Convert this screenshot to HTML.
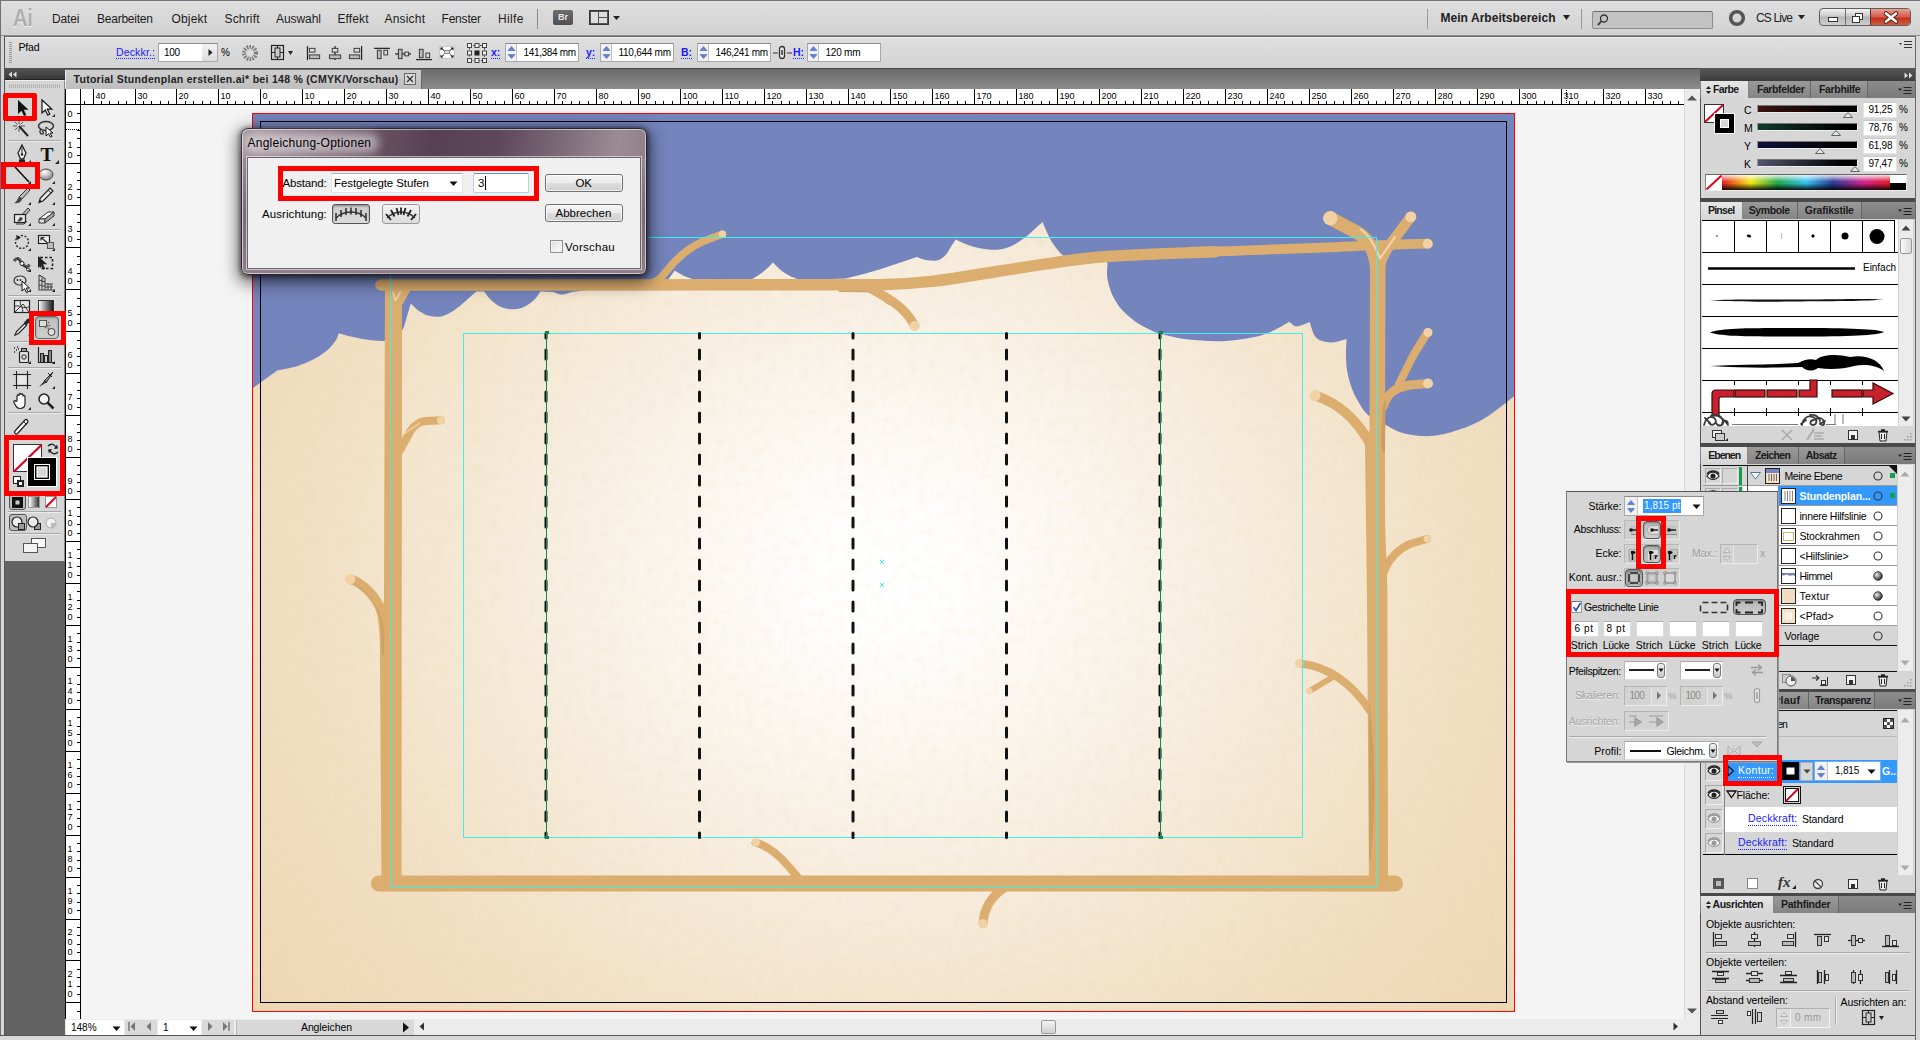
<!DOCTYPE html>
<html lang="de"><head><meta charset="utf-8"><title>Adobe Illustrator</title>
<style>
*{box-sizing:border-box;margin:0;padding:0}
html,body{width:1920px;height:1040px;overflow:hidden;background:#d6d6d6}
body{font-family:"Liberation Sans",sans-serif;font-size:11px;color:#000}
#root{position:absolute;left:0;top:0;width:1920px;height:1040px;overflow:hidden;background:#d6d6d6}
.a{position:absolute}
.t{position:absolute;white-space:nowrap;line-height:14px;height:14px}
.b{font-weight:bold}
.inp{position:absolute;background:#fff;border:1px solid #a9a9a9;border-top-color:#8a8a8a}
.lnk{color:#1a1aff;border-bottom:1px dotted #1a1aff}
.red{position:absolute;border:5px solid #f00}
.tab{position:absolute;height:17px;font-weight:bold;font-size:11px;line-height:16px;color:#222;padding-left:8px;border-right:1px solid #666;background:linear-gradient(#9a9a9a,#848484)}
.tab.on{background:linear-gradient(#e6e6e6,#d6d6d6);color:#111;border-right:1px solid #888}
.tabrow{position:absolute;height:17px;background:linear-gradient(#8c8c8c,#7a7a7a)}
.sep{position:absolute;background:#4a4a4a}
svg{position:absolute;overflow:visible}
</style>
</head>
<body>
<div id="root">
<div class="a" style="left:0;top:0;width:1920px;height:36px;background:linear-gradient(#dedede,#d2d2d2);border-bottom:1px solid #8e8e8e;border-top:1px solid #9a9a9a"></div>
<div class="a" style="left:0;top:0;width:1px;height:1040px;background:#6b6f80"></div><div class="a" style="left:0;top:0;width:1920px;height:1px;background:#77737a"></div>
<div class="t b" style="left:12.5px;top:7px;font-size:11px;font-size:23px;line-height:23px;height:23px;color:#aeaeae;letter-spacing:-0.5px;text-shadow:0 1px 0 #f2f2f2;transform-origin:0 0;transform:scaleX(0.88)">Ai</div>
<div class="t" style="left:52px;top:12px;font-size:12px;letter-spacing:-0.18px;color:#1c1c1c">Datei</div>
<div class="t" style="left:97px;top:12px;font-size:12px;letter-spacing:-0.23px;color:#1c1c1c">Bearbeiten</div>
<div class="t" style="left:171.5px;top:12px;font-size:12px;letter-spacing:0.16px;color:#1c1c1c">Objekt</div>
<div class="t" style="left:224.5px;top:12px;font-size:12px;letter-spacing:0.17px;color:#1c1c1c">Schrift</div>
<div class="t" style="left:276px;top:12px;font-size:12px;letter-spacing:-0.06px;color:#1c1c1c">Auswahl</div>
<div class="t" style="left:337.5px;top:12px;font-size:12px;letter-spacing:0.11px;color:#1c1c1c">Effekt</div>
<div class="t" style="left:384.5px;top:12px;font-size:12px;letter-spacing:0.19px;color:#1c1c1c">Ansicht</div>
<div class="t" style="left:441.5px;top:12px;font-size:12px;letter-spacing:-0.20px;color:#1c1c1c">Fenster</div>
<div class="t" style="left:498px;top:12px;font-size:12px;letter-spacing:0.37px;color:#1c1c1c">Hilfe</div>
<div class="a" style="left:537px;top:9px;width:1px;height:20px;background:#8a8a8a"></div>
<div class="a" style="left:553px;top:10px;width:20px;height:15px;background:linear-gradient(#6d6d6d,#4f4f4f);border-radius:2px;color:#e8e8e8;font-size:9px;font-weight:bold;line-height:15px;text-align:center">Br</div>
<svg style="left:589px;top:10px" width="36" height="16"><rect x="0.5" y="0.5" width="19" height="14" fill="#555" stroke="#333"/><rect x="2" y="2" width="7" height="11" fill="#ddd"/><rect x="10" y="2" width="8" height="5" fill="#ddd"/><rect x="10" y="8" width="8" height="5" fill="#ddd"/><path d="M24 6h7l-3.500 4z" fill="#222"/></svg>
<div class="a" style="left:1427px;top:9px;width:1px;height:20px;background:#9a9a9a"></div>
<div class="t" style="left:1440.5px;top:11px;font-size:12px;letter-spacing:0.04px;font-weight:bold;color:#222">Mein Arbeitsbereich</div>
<svg style="left:1562px;top:14px" width="10" height="8"><path d="M1 1h7l-3.500 5z" fill="#222"/></svg>
<div class="a" style="left:1581px;top:9px;width:1px;height:20px;background:#9a9a9a"></div>
<div class="a" style="left:1592px;top:11px;width:121px;height:18px;background:#c2c2c2;border:1px solid #8c8c8c;border-top-color:#6f6f6f;border-radius:2px"></div>
<svg style="left:1596px;top:13px" width="14" height="14"><circle cx="8" cy="5.500" r="3.500" fill="none" stroke="#333" stroke-width="1.300"/><path d="M5.500 8L2 12" stroke="#333" stroke-width="1.800"/></svg>
<svg style="left:1728px;top:9px" width="18" height="18"><circle cx="9" cy="9" r="6.300" fill="none" stroke="#555" stroke-width="3.600"/></svg>
<div class="t" style="left:1756px;top:11px;font-size:12px;letter-spacing:-0.84px;color:#222">CS Live</div>
<svg style="left:1797px;top:14px" width="10" height="8"><path d="M1 1h7l-3.500 4.500z" fill="#222"/></svg>
<div class="a" style="left:1819px;top:8px;width:92px;height:18px;border:1px solid #5d5d5d;border-radius:4px;background:linear-gradient(#f4f4f4,#c9c9c9 45%,#b5b5b5 50%,#d0d0d0);overflow:hidden"><div class="a" style="left:25px;top:0;width:1px;height:18px;background:#6e6e6e"></div><div class="a" style="left:50px;top:0;width:42px;height:18px;background:linear-gradient(#e7a194,#d4594a 45%,#c0311d 50%,#d8694d);border-left:1px solid #6a2a22"></div><div class="a" style="left:8px;top:8px;width:10px;height:5px;border:1px solid #333;background:#fff"></div><div class="a" style="left:35px;top:4px;width:8px;height:7px;border:1px solid #333;background:#fff"></div><div class="a" style="left:32px;top:7px;width:8px;height:7px;border:1px solid #333;background:#fff"></div><svg style="left:64px;top:3px" width="14" height="11"><path d="M2 1.500l10 8M12 1.500l-10 8" stroke="#5a1a12" stroke-width="4.500" stroke-linecap="round"/><path d="M2 1.500l10 8M12 1.500l-10 8" stroke="#fff" stroke-width="2.600" stroke-linecap="round"/></svg></div>
<div class="a" style="left:4px;top:36px;width:1916px;height:32px;background:linear-gradient(#dedede,#d4d4d4);border-left:1px solid #555;border-top:1px solid #666;box-shadow:inset 0 1px 0 #f0f0f0"></div>
<div class="a" style="left:9px;top:42px;width:3px;height:22px;background:repeating-linear-gradient(#999 0 1px,transparent 1px 2px)"></div>
<div class="t" style="left:18.5px;top:40px;font-size:10.5px;letter-spacing:-0.20px;">Pfad</div>
<div class="t lnk" style="left:116px;top:46px;font-size:10.5px;letter-spacing:0.15px;height:13px;line-height:12px">Deckkr.:</div>
<div class="inp" style="left:158px;top:43px;width:60px;height:19px"></div>
<div class="a" style="left:202px;top:44px;width:15px;height:17px;background:linear-gradient(#f2f2f2,#dcdcdc)"></div>
<svg style="left:207px;top:48px" width="8" height="10"><path d="M1.500 1l4 3.500l-4 3.500z" fill="#222"/></svg>
<div class="t" style="left:164px;top:46px;font-size:10px;letter-spacing:-0.34px;">100</div>
<div class="t" style="left:221px;top:46px;font-size:10px;">%</div>
<svg style="left:241px;top:44px" width="18" height="18"><circle cx="9" cy="9" r="6" fill="none" stroke="#777" stroke-width="4" stroke-dasharray="1.500 1.200"/><circle cx="9" cy="9" r="2.200" fill="#ddd"/></svg>
<svg style="left:270px;top:44px" width="26" height="18"><rect x="1.500" y="1.500" width="12" height="14" fill="none" stroke="#222" stroke-width="1.200"/><rect x="5" y="4" width="5" height="9" fill="#ccc" stroke="#222"/><path d="M7.500 1v3M7.500 13v3M1 8.500h4M10 8.500h4" stroke="#222"/><path d="M18 7h5l-2.500 4z" fill="#222"/></svg>
<svg style="left:306px;top:45.500px" width="17" height="15" viewBox="0 0 18 16"><path d="M1.500 0v15" stroke="#222" stroke-width="1.300"/><rect x="3.500" y="2.500" width="6" height="4" fill="#ddd" stroke="#333"/><rect x="3.500" y="9.500" width="11" height="4" fill="#bbb" stroke="#333"/></svg>
<svg style="left:327px;top:45.500px" width="17" height="15" viewBox="0 0 18 16"><path d="M8.500 0v15" stroke="#222" stroke-width="1.300"/><rect x="5.500" y="2.500" width="6" height="4" fill="#ddd" stroke="#333"/><rect x="2.500" y="9.500" width="12" height="4" fill="#bbb" stroke="#333"/></svg>
<svg style="left:347px;top:45.500px" width="17" height="15" viewBox="0 0 18 16"><path d="M15.500 0v15" stroke="#222" stroke-width="1.300"/><rect x="7.500" y="2.500" width="6" height="4" fill="#ddd" stroke="#333"/><rect x="2.500" y="9.500" width="11" height="4" fill="#bbb" stroke="#333"/></svg>
<svg style="left:374px;top:45.500px" width="17" height="15" viewBox="0 0 18 16"><path d="M0 2.500h17" stroke="#222" stroke-width="1.300"/><rect x="3.500" y="4.500" width="4" height="9" fill="#bbb" stroke="#333"/><rect x="10.500" y="4.500" width="4" height="5" fill="#ddd" stroke="#333"/></svg>
<svg style="left:395px;top:45.500px" width="17" height="15" viewBox="0 0 18 16"><path d="M0 8.500h17" stroke="#222" stroke-width="1.300"/><rect x="3.500" y="3.500" width="4" height="10" fill="#bbb" stroke="#333"/><rect x="10.500" y="6.500" width="4" height="4" fill="#ddd" stroke="#333"/></svg>
<svg style="left:416px;top:45.500px" width="17" height="15" viewBox="0 0 18 16"><path d="M0 14.500h17" stroke="#222" stroke-width="1.300"/><rect x="3.500" y="3.500" width="4" height="9" fill="#bbb" stroke="#333"/><rect x="10.500" y="7.500" width="4" height="5" fill="#ddd" stroke="#333"/></svg>
<svg style="left:439px;top:46px" width="16" height="14"><rect x="0.500" y="0.500" width="15" height="12" fill="#fff" stroke="#c8c8c8"/><rect x="5.500" y="4.500" width="5" height="3" fill="#ddd" stroke="#888"/><path d="M1.500 1.500l3 0l-3 3zM14.500 1.500l-3 0l3 3zM1.500 11.500l3 0l-3 -3zM14.500 11.500l-3 0l3 -3z" fill="#111"/><path d="M2 2l3 2.500M14 2l-3 2.500M2 11l3 -2.500M14 11l-3 -2.500" stroke="#111"/></svg>
<svg style="left:467px;top:43px" width="20" height="20"><rect x="2.500" y="2.500" width="15" height="15" fill="none" stroke="#555" stroke-dasharray="2 1.500"/><g fill="#eee" stroke="#444"><rect x="0.500" y="0.500" width="4" height="4"/><rect x="8" y="0.500" width="4" height="4"/><rect x="15.500" y="0.500" width="4" height="4"/><rect x="0.500" y="8" width="4" height="4"/><rect x="15.500" y="8" width="4" height="4"/><rect x="0.500" y="15.500" width="4" height="4"/><rect x="8" y="15.500" width="4" height="4"/><rect x="15.500" y="15.500" width="4" height="4"/></g><rect x="7.500" y="7.500" width="5" height="5" fill="#222"/></svg>
<div class="t lnk b" style="left:491px;top:46px;font-size:10.5px;height:13px;line-height:12px">x:</div><div class="inp" style="left:505px;top:43px;width:74px;height:19px"></div><div class="a" style="left:506px;top:44px;width:11px;height:17px;background:#f0f0f0;border-right:1px solid #c4c4c4"></div><svg style="left:507px;top:45px" width="9" height="15"><path d="M1 5.500L4.500 1.500L8 5.500z" fill="#6480d8" stroke="#3a55b0" stroke-width="0.500"/><path d="M1 9.500L4.500 13.500L8 9.500z" fill="#6480d8" stroke="#3a55b0" stroke-width="0.500"/></svg><div class="t" style="left:523.5px;top:46px;font-size:10px;letter-spacing:-0.34px;">141,384 mm</div>
<div class="t lnk b" style="left:586px;top:46px;font-size:10.5px;height:13px;line-height:12px">y:</div><div class="inp" style="left:600px;top:43px;width:74px;height:19px"></div><div class="a" style="left:601px;top:44px;width:11px;height:17px;background:#f0f0f0;border-right:1px solid #c4c4c4"></div><svg style="left:602px;top:45px" width="9" height="15"><path d="M1 5.500L4.500 1.500L8 5.500z" fill="#6480d8" stroke="#3a55b0" stroke-width="0.500"/><path d="M1 9.500L4.500 13.500L8 9.500z" fill="#6480d8" stroke="#3a55b0" stroke-width="0.500"/></svg><div class="t" style="left:618.5px;top:46px;font-size:10px;letter-spacing:-0.26px;">110,644 mm</div>
<div class="t lnk b" style="left:681px;top:46px;font-size:10.5px;height:13px;line-height:12px">B:</div><div class="inp" style="left:697px;top:43px;width:74px;height:19px"></div><div class="a" style="left:698px;top:44px;width:11px;height:17px;background:#f0f0f0;border-right:1px solid #c4c4c4"></div><svg style="left:699px;top:45px" width="9" height="15"><path d="M1 5.500L4.500 1.500L8 5.500z" fill="#6480d8" stroke="#3a55b0" stroke-width="0.500"/><path d="M1 9.500L4.500 13.500L8 9.500z" fill="#6480d8" stroke="#3a55b0" stroke-width="0.500"/></svg><div class="t" style="left:715.5px;top:46px;font-size:10px;letter-spacing:-0.34px;">146,241 mm</div>
<svg style="left:773px;top:45px" width="20" height="16"><path d="M0 8h5M14 8h5" stroke="#333"/><rect x="6.500" y="1.500" width="5" height="12" rx="2.500" fill="#eee" stroke="#333" stroke-width="1.300"/><path d="M9 5v5" stroke="#333" stroke-width="1.500"/></svg>
<div class="t lnk b" style="left:793px;top:46px;font-size:10.5px;height:13px;line-height:12px">H:</div><div class="inp" style="left:807px;top:43px;width:74px;height:19px"></div><div class="a" style="left:808px;top:44px;width:11px;height:17px;background:#f0f0f0;border-right:1px solid #c4c4c4"></div><svg style="left:809px;top:45px" width="9" height="15"><path d="M1 5.500L4.500 1.500L8 5.500z" fill="#6480d8" stroke="#3a55b0" stroke-width="0.500"/><path d="M1 9.500L4.500 13.500L8 9.500z" fill="#6480d8" stroke="#3a55b0" stroke-width="0.500"/></svg><div class="t" style="left:825.5px;top:46px;font-size:10px;letter-spacing:-0.22px;">120 mm</div>
<svg style="left:1899px;top:40px" width="14" height="10"><path d="M0 3h3l-1.500 2z" fill="#333"/><path d="M5 1.500h8M5 4.500h8M5 7.500h8" stroke="#333"/></svg>
<div class="a" style="left:65px;top:68px;width:1635px;height:21px;background:linear-gradient(#6a6a6a,#8c8c8c);border-top:1px solid #4a4a4a"></div>
<div class="a" style="left:65px;top:70px;width:357px;height:19px;background:linear-gradient(#cfcfcf,#bdbdbd);border-right:1px solid #666;border-left:1px solid #e8e8e8"></div>
<div class="t" style="left:73.5px;top:72px;font-size:10.5px;letter-spacing:0.29px;font-weight:bold;color:#222">Tutorial Stundenplan erstellen.ai* bei 148 % (CMYK/Vorschau)</div>
<svg style="left:404px;top:73px" width="12" height="12"><rect x="0.500" y="0.500" width="11" height="11" fill="#d8d8d8" stroke="#666"/><path d="M3 3l6 6M9 3l-6 6" stroke="#333" stroke-width="1.300"/></svg>
<div class="a" style="left:81px;top:105px;width:1603px;height:914px;background:#f4f4f4"></div>
<div class="a" style="left:65px;top:89px;width:1619px;height:16px;background:#fff;border-bottom:1px solid #000"></div>
<div class="a" style="left:65px;top:89px;width:16px;height:930px;background:#fff;border-right:1px solid #000;border-left:1px solid #000"></div>
<div class="a" style="left:65px;top:89px;width:16px;height:16px;background:#fff;border-right:1px solid #000;border-bottom:1px solid #000;border-left:1px solid #000"></div>
<svg style="left:0;top:89px" width="1684" height="16"><g stroke="#000" stroke-width="1" shape-rendering="crispEdges"><path d="M84.5 12v4"/><path d="M93.5 0v16"/><path d="M101.5 12v4"/><path d="M109.5 12v4"/><path d="M118.5 12v4"/><path d="M126.5 12v4"/><path d="M135.5 0v16"/><path d="M143.5 12v4"/><path d="M151.5 12v4"/><path d="M160.5 12v4"/><path d="M168.5 12v4"/><path d="M176.5 0v16"/><path d="M185.5 12v4"/><path d="M193.5 12v4"/><path d="M202.5 12v4"/><path d="M210.5 12v4"/><path d="M218.5 0v16"/><path d="M227.5 12v4"/><path d="M235.5 12v4"/><path d="M244.5 12v4"/><path d="M252.5 12v4"/><path d="M260.5 0v16"/><path d="M269.5 12v4"/><path d="M277.5 12v4"/><path d="M286.5 12v4"/><path d="M294.5 12v4"/><path d="M302.5 0v16"/><path d="M311.5 12v4"/><path d="M319.5 12v4"/><path d="M328.5 12v4"/><path d="M336.5 12v4"/><path d="M344.5 0v16"/><path d="M353.5 12v4"/><path d="M361.5 12v4"/><path d="M369.5 12v4"/><path d="M378.5 12v4"/><path d="M386.5 0v16"/><path d="M395.5 12v4"/><path d="M403.5 12v4"/><path d="M411.5 12v4"/><path d="M420.5 12v4"/><path d="M428.5 0v16"/><path d="M437.5 12v4"/><path d="M445.5 12v4"/><path d="M453.5 12v4"/><path d="M462.5 12v4"/><path d="M470.5 0v16"/><path d="M479.5 12v4"/><path d="M487.5 12v4"/><path d="M495.5 12v4"/><path d="M504.5 12v4"/><path d="M512.5 0v16"/><path d="M520.5 12v4"/><path d="M529.5 12v4"/><path d="M537.5 12v4"/><path d="M546.5 12v4"/><path d="M554.5 0v16"/><path d="M562.5 12v4"/><path d="M571.5 12v4"/><path d="M579.5 12v4"/><path d="M588.5 12v4"/><path d="M596.5 0v16"/><path d="M604.5 12v4"/><path d="M613.5 12v4"/><path d="M621.5 12v4"/><path d="M630.5 12v4"/><path d="M638.5 0v16"/><path d="M646.5 12v4"/><path d="M655.5 12v4"/><path d="M663.5 12v4"/><path d="M672.5 12v4"/><path d="M680.5 0v16"/><path d="M688.5 12v4"/><path d="M697.5 12v4"/><path d="M705.5 12v4"/><path d="M713.5 12v4"/><path d="M722.5 0v16"/><path d="M730.5 12v4"/><path d="M739.5 12v4"/><path d="M747.5 12v4"/><path d="M755.5 12v4"/><path d="M764.5 0v16"/><path d="M772.5 12v4"/><path d="M781.5 12v4"/><path d="M789.5 12v4"/><path d="M797.5 12v4"/><path d="M806.5 0v16"/><path d="M814.5 12v4"/><path d="M823.5 12v4"/><path d="M831.5 12v4"/><path d="M839.5 12v4"/><path d="M848.5 0v16"/><path d="M856.5 12v4"/><path d="M864.5 12v4"/><path d="M873.5 12v4"/><path d="M881.5 12v4"/><path d="M890.5 0v16"/><path d="M898.5 12v4"/><path d="M906.5 12v4"/><path d="M915.5 12v4"/><path d="M923.5 12v4"/><path d="M932.5 0v16"/><path d="M940.5 12v4"/><path d="M948.5 12v4"/><path d="M957.5 12v4"/><path d="M965.5 12v4"/><path d="M974.5 0v16"/><path d="M982.5 12v4"/><path d="M990.5 12v4"/><path d="M999.5 12v4"/><path d="M1007.5 12v4"/><path d="M1016.5 0v16"/><path d="M1024.5 12v4"/><path d="M1032.5 12v4"/><path d="M1041.5 12v4"/><path d="M1049.5 12v4"/><path d="M1057.5 0v16"/><path d="M1066.5 12v4"/><path d="M1074.5 12v4"/><path d="M1083.5 12v4"/><path d="M1091.5 12v4"/><path d="M1099.5 0v16"/><path d="M1108.5 12v4"/><path d="M1116.5 12v4"/><path d="M1125.5 12v4"/><path d="M1133.5 12v4"/><path d="M1141.5 0v16"/><path d="M1150.5 12v4"/><path d="M1158.5 12v4"/><path d="M1167.5 12v4"/><path d="M1175.5 12v4"/><path d="M1183.5 0v16"/><path d="M1192.5 12v4"/><path d="M1200.5 12v4"/><path d="M1208.5 12v4"/><path d="M1217.5 12v4"/><path d="M1225.5 0v16"/><path d="M1234.5 12v4"/><path d="M1242.5 12v4"/><path d="M1250.5 12v4"/><path d="M1259.5 12v4"/><path d="M1267.5 0v16"/><path d="M1276.5 12v4"/><path d="M1284.5 12v4"/><path d="M1292.5 12v4"/><path d="M1301.5 12v4"/><path d="M1309.5 0v16"/><path d="M1318.5 12v4"/><path d="M1326.5 12v4"/><path d="M1334.5 12v4"/><path d="M1343.5 12v4"/><path d="M1351.5 0v16"/><path d="M1359.5 12v4"/><path d="M1368.5 12v4"/><path d="M1376.5 12v4"/><path d="M1385.5 12v4"/><path d="M1393.5 0v16"/><path d="M1401.5 12v4"/><path d="M1410.5 12v4"/><path d="M1418.5 12v4"/><path d="M1427.5 12v4"/><path d="M1435.5 0v16"/><path d="M1443.5 12v4"/><path d="M1452.5 12v4"/><path d="M1460.5 12v4"/><path d="M1469.5 12v4"/><path d="M1477.5 0v16"/><path d="M1485.5 12v4"/><path d="M1494.5 12v4"/><path d="M1502.5 12v4"/><path d="M1511.5 12v4"/><path d="M1519.5 0v16"/><path d="M1527.5 12v4"/><path d="M1536.5 12v4"/><path d="M1544.5 12v4"/><path d="M1552.5 12v4"/><path d="M1561.5 0v16"/><path d="M1569.5 12v4"/><path d="M1578.5 12v4"/><path d="M1586.5 12v4"/><path d="M1594.5 12v4"/><path d="M1603.5 0v16"/><path d="M1611.5 12v4"/><path d="M1620.5 12v4"/><path d="M1628.5 12v4"/><path d="M1636.5 12v4"/><path d="M1645.5 0v16"/><path d="M1653.5 12v4"/><path d="M1662.5 12v4"/><path d="M1670.5 12v4"/><path d="M1678.5 12v4"/></g><g font-family="Liberation Sans, sans-serif" font-size="9" fill="#000"><text x="95.5" y="10">40</text><text x="137.5" y="10">30</text><text x="178.5" y="10">20</text><text x="220.5" y="10">10</text><text x="262.5" y="10">0</text><text x="304.5" y="10">10</text><text x="346.5" y="10">20</text><text x="388.5" y="10">30</text><text x="430.5" y="10">40</text><text x="472.5" y="10">50</text><text x="514.5" y="10">60</text><text x="556.5" y="10">70</text><text x="598.5" y="10">80</text><text x="640.5" y="10">90</text><text x="682.5" y="10">100</text><text x="724.5" y="10">110</text><text x="766.5" y="10">120</text><text x="808.5" y="10">130</text><text x="850.5" y="10">140</text><text x="892.5" y="10">150</text><text x="934.5" y="10">160</text><text x="976.5" y="10">170</text><text x="1018.5" y="10">180</text><text x="1059.5" y="10">190</text><text x="1101.5" y="10">200</text><text x="1143.5" y="10">210</text><text x="1185.5" y="10">220</text><text x="1227.5" y="10">230</text><text x="1269.5" y="10">240</text><text x="1311.5" y="10">250</text><text x="1353.5" y="10">260</text><text x="1395.5" y="10">270</text><text x="1437.5" y="10">280</text><text x="1479.5" y="10">290</text><text x="1521.5" y="10">300</text><text x="1563.5" y="10">310</text><text x="1605.5" y="10">320</text><text x="1647.5" y="10">330</text></g></svg>
<svg style="left:65px;top:0" width="16" height="1019"><g stroke="#000" stroke-width="1" shape-rendering="crispEdges"><path d="M12 113.5h4"/><path d="M1 122.5h15"/><path d="M12 130.5h4"/><path d="M12 138.5h4"/><path d="M12 147.5h4"/><path d="M12 155.5h4"/><path d="M1 163.5h15"/><path d="M12 172.5h4"/><path d="M12 180.5h4"/><path d="M12 189.5h4"/><path d="M12 197.5h4"/><path d="M1 205.5h15"/><path d="M12 214.5h4"/><path d="M12 222.5h4"/><path d="M12 231.5h4"/><path d="M12 239.5h4"/><path d="M1 247.5h15"/><path d="M12 256.5h4"/><path d="M12 264.5h4"/><path d="M12 273.5h4"/><path d="M12 281.5h4"/><path d="M1 289.5h15"/><path d="M12 298.5h4"/><path d="M12 306.5h4"/><path d="M12 314.5h4"/><path d="M12 323.5h4"/><path d="M1 331.5h15"/><path d="M12 340.5h4"/><path d="M12 348.5h4"/><path d="M12 356.5h4"/><path d="M12 365.5h4"/><path d="M1 373.5h15"/><path d="M12 382.5h4"/><path d="M12 390.5h4"/><path d="M12 398.5h4"/><path d="M12 407.5h4"/><path d="M1 415.5h15"/><path d="M12 424.5h4"/><path d="M12 432.5h4"/><path d="M12 440.5h4"/><path d="M12 449.5h4"/><path d="M1 457.5h15"/><path d="M12 465.5h4"/><path d="M12 474.5h4"/><path d="M12 482.5h4"/><path d="M12 491.5h4"/><path d="M1 499.5h15"/><path d="M12 507.5h4"/><path d="M12 516.5h4"/><path d="M12 524.5h4"/><path d="M12 533.5h4"/><path d="M1 541.5h15"/><path d="M12 549.5h4"/><path d="M12 558.5h4"/><path d="M12 566.5h4"/><path d="M12 575.5h4"/><path d="M1 583.5h15"/><path d="M12 591.5h4"/><path d="M12 600.5h4"/><path d="M12 608.5h4"/><path d="M12 617.5h4"/><path d="M1 625.5h15"/><path d="M12 633.5h4"/><path d="M12 642.5h4"/><path d="M12 650.5h4"/><path d="M12 658.5h4"/><path d="M1 667.5h15"/><path d="M12 675.5h4"/><path d="M12 684.5h4"/><path d="M12 692.5h4"/><path d="M12 700.5h4"/><path d="M1 709.5h15"/><path d="M12 717.5h4"/><path d="M12 726.5h4"/><path d="M12 734.5h4"/><path d="M12 742.5h4"/><path d="M1 751.5h15"/><path d="M12 759.5h4"/><path d="M12 768.5h4"/><path d="M12 776.5h4"/><path d="M12 784.5h4"/><path d="M1 793.5h15"/><path d="M12 801.5h4"/><path d="M12 809.5h4"/><path d="M12 818.5h4"/><path d="M12 826.5h4"/><path d="M1 835.5h15"/><path d="M12 843.5h4"/><path d="M12 851.5h4"/><path d="M12 860.5h4"/><path d="M12 868.5h4"/><path d="M1 877.5h15"/><path d="M12 885.5h4"/><path d="M12 893.5h4"/><path d="M12 902.5h4"/><path d="M12 910.5h4"/><path d="M1 919.5h15"/><path d="M12 927.5h4"/><path d="M12 935.5h4"/><path d="M12 944.5h4"/><path d="M12 952.5h4"/><path d="M1 960.5h15"/><path d="M12 969.5h4"/><path d="M12 977.5h4"/><path d="M12 986.5h4"/><path d="M12 994.5h4"/><path d="M1 1002.5h15"/><path d="M12 1011.5h4"/></g><g font-family="Liberation Sans, sans-serif" font-size="9" fill="#000"><text x="2.5" y="117.0">0</text><text x="2.5" y="148.0">1</text><text x="2.5" y="158.0">0</text><text x="2.5" y="190.0">2</text><text x="2.5" y="200.0">0</text><text x="2.5" y="232.0">3</text><text x="2.5" y="242.0">0</text><text x="2.5" y="274.0">4</text><text x="2.5" y="284.0">0</text><text x="2.5" y="316.0">5</text><text x="2.5" y="326.0">0</text><text x="2.5" y="358.0">6</text><text x="2.5" y="368.0">0</text><text x="2.5" y="400.0">7</text><text x="2.5" y="410.0">0</text><text x="2.5" y="442.0">8</text><text x="2.5" y="452.0">0</text><text x="2.5" y="484.0">9</text><text x="2.5" y="494.0">0</text><text x="2.5" y="516.0">1</text><text x="2.5" y="526.0">0</text><text x="2.5" y="536.0">0</text><text x="2.5" y="558.0">1</text><text x="2.5" y="568.0">1</text><text x="2.5" y="578.0">0</text><text x="2.5" y="600.0">1</text><text x="2.5" y="610.0">2</text><text x="2.5" y="620.0">0</text><text x="2.5" y="642.0">1</text><text x="2.5" y="652.0">3</text><text x="2.5" y="662.0">0</text><text x="2.5" y="684.0">1</text><text x="2.5" y="694.0">4</text><text x="2.5" y="704.0">0</text><text x="2.5" y="726.0">1</text><text x="2.5" y="736.0">5</text><text x="2.5" y="746.0">0</text><text x="2.5" y="768.0">1</text><text x="2.5" y="778.0">6</text><text x="2.5" y="788.0">0</text><text x="2.5" y="810.0">1</text><text x="2.5" y="820.0">7</text><text x="2.5" y="830.0">0</text><text x="2.5" y="852.0">1</text><text x="2.5" y="862.0">8</text><text x="2.5" y="872.0">0</text><text x="2.5" y="894.0">1</text><text x="2.5" y="904.0">9</text><text x="2.5" y="914.0">0</text><text x="2.5" y="935.0">2</text><text x="2.5" y="945.0">0</text><text x="2.5" y="955.0">0</text><text x="2.5" y="977.0">2</text><text x="2.5" y="987.0">1</text><text x="2.5" y="997.0">0</text></g></svg>
<div class="a" style="left:66px;top:129px;width:14px;height:1px;background:repeating-linear-gradient(90deg,#000 0 1px,transparent 1px 2px)"></div>
<div class="a" style="left:1566px;top:90px;width:1px;height:14px;background:repeating-linear-gradient(#000 0 1px,transparent 1px 2px)"></div>
<div class="a" style="left:1684px;top:89px;width:16px;height:930px;background:#ececec;border-left:1px solid #dcdcdc"></div>
<svg style="left:1686px;top:94px" width="12" height="8"><path d="M1 6.500L6 1.500L11 6.500z" fill="#555"/></svg>
<svg style="left:1686px;top:1007px" width="12" height="8"><path d="M1 1.500L6 6.500L11 1.500z" fill="#555"/></svg>
<div class="a" style="left:65px;top:1019px;width:1635px;height:16px;background:#ececec"></div>
<div class="a" style="left:66px;top:1020px;width:58px;height:15px;background:#fff"></div>
<div class="t" style="left:71px;top:1021px;font-size:10px;">148%</div>
<svg style="left:112px;top:1026px" width="9" height="6"><path d="M0.500 0.500h8l-4 4.500z" fill="#111"/></svg>
<div class="a" style="left:125px;top:1020px;width:32px;height:15px;background:#dadada"></div>
<svg style="left:128px;top:1022px" width="28" height="10"><path d="M1 0v9" stroke="#777" stroke-width="1.500"/><path d="M7 0v9L2.500 4.500z" fill="#777"/><path d="M23 0v9L18.500 4.500z" fill="#777"/></svg>
<div class="a" style="left:158px;top:1020px;width:43px;height:15px;background:#fff"></div>
<div class="t" style="left:163px;top:1021px;font-size:10px;">1</div>
<svg style="left:189px;top:1026px" width="9" height="6"><path d="M0.500 0.500h8l-4 4.500z" fill="#111"/></svg>
<div class="a" style="left:202px;top:1020px;width:32px;height:15px;background:#dadada"></div>
<svg style="left:206px;top:1022px" width="28" height="10"><path d="M2 0v9L6.500 4.500z" fill="#777"/><path d="M17 0v9L21.500 4.500z" fill="#777"/><path d="M23 0v9" stroke="#777" stroke-width="1.500"/></svg>
<div class="a" style="left:236px;top:1020px;width:178px;height:15px;background:#d8d8d8;border-left:1px solid #bbb"></div>
<div class="t" style="left:301px;top:1020px;font-size:10.5px;letter-spacing:-0.11px;">Angleichen</div>
<svg style="left:402px;top:1022px" width="8" height="11"><path d="M1 0.500v10L7 5.500z" fill="#111"/></svg>
<svg style="left:418px;top:1022px" width="8" height="10"><path d="M6 0.500v8L1.500 4.500z" fill="#333"/></svg>
<svg style="left:1672px;top:1022px" width="8" height="10"><path d="M1.500 0.500v8L6 4.500z" fill="#333"/></svg>
<div class="a" style="left:1041px;top:1020px;width:15px;height:14px;background:linear-gradient(#f4f4f4,#cfcfcf);border:1px solid #999;border-radius:2px"></div>
<div class="a" style="left:0;top:1035px;width:1920px;height:5px;background:#d8d8d8;border-top:1px solid #555"></div>
<div class="a" style="left:1915px;top:36px;width:5px;height:1004px;background:#d8d8d8;border-left:1px solid #666"></div>
<svg style="left:81px;top:105px" width="1603" height="914" viewBox="81 105 1603 914">
<defs><radialGradient id="pg" gradientUnits="userSpaceOnUse" cx="885" cy="575" r="800" gradientTransform="translate(885 575) scale(1 0.88) translate(-885 -575)"><stop offset="0" stop-color="#ffffff"/><stop offset="0.10" stop-color="#fffefd"/><stop offset="0.22" stop-color="#fcf8f2"/><stop offset="0.4" stop-color="#f8efe2"/><stop offset="0.58" stop-color="#f4e6d0"/><stop offset="0.74" stop-color="#f1dfc2"/><stop offset="1" stop-color="#eed7b3"/></radialGradient><clipPath id="bleed"><rect x="252" y="113" width="1263" height="899"/></clipPath><filter id="tex" x="0" y="0" width="100%" height="100%"><feTurbulence type="fractalNoise" baseFrequency="0.11" numOctaves="3" seed="7"/><feColorMatrix values="0 0 0 0 0.80  0 0 0 0 0.62  0 0 0 0 0.38  0 0 0 -1.600 0.900"/></filter></defs>
<g clip-path="url(#bleed)">
<rect x="252" y="113" width="1263" height="899" fill="url(#pg)"/>
<rect x="252" y="113" width="1263" height="899" filter="url(#tex)" opacity="0.16"/>
<path d="M252,113 H1515 V395.5 C1513.6,396.6 1510.9,398.9 1506.5,402.3 C1502.1,405.7 1495.0,411.7 1488.6,415.7 C1482.2,419.7 1475.8,423.4 1468.0,426.5 C1460.2,429.6 1449.3,433.0 1441.5,434.6 C1433.7,436.2 1427.8,436.3 1421.0,436.0 C1414.2,435.7 1406.8,434.4 1401.0,432.6 C1395.2,430.8 1391.6,428.0 1386.0,425.0 C1380.4,422.0 1372.2,418.4 1367.5,414.4 C1362.8,410.4 1360.8,405.7 1358.0,401.0 C1355.2,396.3 1352.8,391.2 1351.0,386.0 C1349.2,380.8 1347.8,375.3 1347.0,370.0 C1346.2,364.7 1346.1,359.2 1346.0,354.0 C1345.9,348.8 1346.5,341.5 1346.6,339.0 C1344.0,339.6 1336.0,342.6 1331.0,342.4 C1326.0,342.2 1319.9,341.1 1316.3,337.7 C1312.7,334.3 1310.7,324.6 1309.6,322.0 C1307.4,322.7 1300.1,326.4 1296.7,326.4 C1293.3,326.3 1290.5,322.5 1289.3,321.7 C1286.9,323.1 1279.6,327.6 1275.0,329.8 C1270.4,332.1 1267.3,333.6 1261.7,335.2 C1256.1,336.8 1248.2,338.2 1241.5,339.2 C1234.8,340.2 1228.0,341.0 1221.3,341.2 C1214.5,341.4 1207.7,341.1 1201.0,340.6 C1194.3,340.2 1187.7,339.6 1181.0,338.5 C1174.3,337.4 1166.4,335.5 1160.8,333.8 C1155.2,332.1 1151.8,330.6 1147.3,328.4 C1142.8,326.2 1138.1,323.5 1133.8,320.4 C1129.5,317.3 1125.1,313.4 1121.7,309.6 C1118.3,305.8 1115.7,301.5 1113.6,297.5 C1111.5,293.5 1110.1,289.2 1109.0,285.4 C1107.9,281.6 1107.2,278.3 1107.0,274.6 C1106.8,270.9 1107.5,265.1 1107.6,263.2 C1106.3,262.3 1107.4,259.2 1100.0,258.0 C1092.6,256.8 1069.5,256.2 1063.4,255.8 C1062.5,254.9 1060.0,252.9 1058.0,250.4 C1056.0,247.9 1053.3,244.4 1051.3,241.0 C1049.3,237.6 1047.5,233.3 1046.0,230.2 C1044.5,227.0 1043.2,223.4 1042.6,222.1 C1041.3,223.2 1037.8,226.3 1035.0,228.8 C1032.2,231.3 1029.7,234.0 1025.7,236.9 C1021.7,239.8 1015.7,244.2 1011.0,246.3 C1006.3,248.4 1002.5,249.3 997.5,249.7 C992.5,250.0 986.2,249.2 981.3,248.4 C976.4,247.6 972.2,246.5 967.9,245.0 C963.6,243.5 957.7,240.5 955.7,239.6 C954.8,240.9 952.2,245.0 950.4,247.7 C948.6,250.4 947.2,253.7 945.0,255.8 C942.8,257.9 940.2,259.8 937.0,260.5 C933.8,261.2 929.4,260.6 926.0,260.0 C922.6,259.4 918.2,257.6 916.7,257.1 C910.7,259.1 892.3,265.6 880.4,269.2 C868.5,272.8 851.2,277.0 845.4,278.6 L800.5,280.0 C798.8,279.3 793.4,277.8 790.0,276.0 C786.6,274.2 782.8,271.8 780.0,269.5 C777.2,267.2 774.2,263.7 773.0,262.5 C771.8,263.7 768.5,267.3 766.0,269.5 C763.5,271.7 760.5,273.8 758.0,275.5 C755.5,277.2 751.9,279.2 750.7,280.0 L694.0,279.5 C692.3,278.9 687.2,277.5 684.0,276.0 C680.8,274.5 676.2,271.5 674.7,270.6 L668.0,280.0 L572.0,292.0 C570.3,292.4 565.2,294.5 562.0,294.5 C558.8,294.5 554.5,292.4 553.0,292.0 L540.5,291.5 C539.4,292.9 536.8,297.4 534.0,300.0 C531.2,302.6 527.7,305.4 524.0,307.0 C520.3,308.6 516.0,309.4 512.0,309.3 C508.0,309.2 503.7,308.2 500.0,306.5 C496.3,304.8 492.6,301.5 490.0,299.0 C487.4,296.5 485.2,292.8 484.2,291.5 L476.1,291.5 C473.9,293.5 466.7,300.2 462.7,303.6 C458.7,307.0 455.5,309.6 451.9,311.7 C448.3,313.8 444.9,315.7 441.1,316.4 C437.3,317.1 432.8,316.8 429.0,315.8 C425.2,314.8 421.2,312.4 418.2,310.4 C415.2,308.4 412.0,304.7 410.8,303.6 C410.1,305.9 408.1,312.8 406.8,317.1 C405.5,321.4 404.8,325.9 402.8,329.2 C400.8,332.5 398.0,335.1 395.0,337.0 C392.0,338.9 387.5,340.1 384.6,340.7 C381.8,341.3 381.3,340.9 377.9,340.7 C374.5,340.5 368.9,340.0 364.4,339.3 C359.9,338.6 355.3,337.6 351.0,336.6 C346.7,335.6 340.8,333.9 338.8,333.3 C338.3,334.4 337.8,337.3 336.0,340.0 C334.2,342.7 331.6,346.3 328.0,349.4 C324.4,352.5 319.8,356.0 314.6,358.8 C309.4,361.6 303.2,364.3 297.0,366.2 C290.8,368.1 280.8,369.6 277.6,370.3 L252.0,388.8 Z" fill="#7484bc"/>
<g fill="none" stroke="#dbad6e" stroke-linecap="round" stroke-linejoin="round">
<path d="M646,285 C648.0,284.2 654.8,281.9 657.9,280.0 C661.0,278.1 661.7,276.5 664.6,273.3 C667.5,270.1 671.6,264.8 675.4,261.0 C679.2,257.2 683.2,253.5 687.5,250.4 C691.8,247.3 696.5,244.5 701.0,242.3 C705.5,240.1 710.8,238.3 714.4,237.0 C718.0,235.7 721.1,234.7 722.5,234.2" stroke-width="7.600"/>
<path d="M840,290.500 L874,291 L889,303.500" stroke="#c69a5e" stroke-width="3" opacity="0.850"/>
<path d="M868,287 L882,295 C896,302.500 908,312.500 914.700,326" stroke-width="9.300"/>
<path d="M398,305 L408,287" stroke-width="7.500"/>
<path d="M400,450 L410.500,431 C414.500,424.500 420,421.500 426,421 L441,420.200" stroke-width="8"/>
<path d="M399.500,412 L399.500,437 L419,423.500" stroke="#f1d2a5" stroke-width="2" opacity="0.800"/>
<path d="M350.200,579 C362,583 376,595 381.500,612 C384,622 385,640 385,665" stroke-width="9.500"/>
<path d="M755.500,842.500 C768,846 780,856 790,868 L800,880" stroke-width="8"/>
<path d="M1004,888 C992,896 984,908 983,923.500" stroke-width="9"/>
<path d="M1376.800,270 C1376.800,256 1370,240 1358,233 L1330.300,218.200" stroke-width="13.500"/>
<path d="M1379.500,270 C1380,259 1386,250 1392,242 L1410.800,216.900" stroke-width="10.500"/>
<path d="M1383,407 C1388,392 1395,388 1410,385 L1428,383.500" stroke-width="9"/>
<path d="M1399,384 L1414,354 L1427.500,332.500" stroke-width="8"/>
<path d="M1315,395.500 C1335,402 1355,415 1372,447" stroke-width="10"/>
<path d="M1299.500,663.500 C1325,666 1350,680 1371,712" stroke-width="8"/>
<path d="M1309.500,691 L1333,677" stroke-width="6"/>
<path d="M1384,572 C1388,560 1398,549 1411,543.500 L1427,539" stroke-width="8"/>
<path d="M1090,258 C1140,254 1230,251 1300,248.300 C1350,246.500 1400,244.200 1427.700,243.700" stroke-width="9.800"/>
<path d="M381,285 L880,284.700 C930,284 960,277 1000,271 C1040,265 1070,259.500 1100,257 C1140,254 1170,253.500 1215,251.800" stroke-width="11.500"/>
<path d="M379,883.500 H1395" stroke-width="16"/>
</g>
<path d="M385,282 L402,282 L401.500,886 L381.500,886 L380,660 C380,630 383,615 384,598 Z" fill="#dbad6e"/>
<path d="M357,587 C368,592 377,604 380.500,622 C381.500,630 381,640 381.500,655 L384,655 L384.500,635 C384,615 372,596 361,588 Z" fill="#c69a5e" opacity="0.600"/>
<path d="M1370,264 L1385.500,264 L1385,440 L1385,520 L1387.400,590 L1388,886 L1369,886 L1367,600 L1366,520 L1365,447 L1369.500,430 Z" fill="#dbad6e"/>
<path d="M1369,700 C1376,760 1376,800 1371,860 L1369,860 Z" fill="#c69a5e" opacity="0.700"/>
<path d="M1386,398 C1382,404 1381,420 1382,452 L1385,452 L1385.500,410 Z" fill="#c69a5e" opacity="0.800"/>
<path d="M1361,229.500 C1370,236 1376,248 1380,258.500 L1395,237" fill="none" stroke="#f1d2a5" stroke-width="2.200" stroke-linejoin="round" stroke-linecap="round"/>
<path d="M392.700,291.500 L395.400,300.500 L400.700,291.500" fill="none" stroke="#f1d2a5" stroke-width="1.600" stroke-linejoin="round"/>
<circle cx="722.5" cy="234.2" r="3.7" fill="#f1d2a5"/>
<circle cx="914.7" cy="326" r="5" fill="#f1d2a5"/>
<circle cx="441" cy="420.2" r="4" fill="#f1d2a5"/>
<circle cx="350.2" cy="579" r="5.2" fill="#f1d2a5"/>
<circle cx="756" cy="842.5" r="4" fill="#f1d2a5"/>
<circle cx="983" cy="923.5" r="4.5" fill="#f1d2a5"/>
<circle cx="1330.3" cy="218.2" r="7.2" fill="#f1d2a5"/>
<circle cx="1410.8" cy="216.9" r="5.5" fill="#f1d2a5"/>
<circle cx="1427.7" cy="243.7" r="5" fill="#f1d2a5"/>
<circle cx="1428" cy="383.5" r="5" fill="#f1d2a5"/>
<circle cx="1428" cy="332.5" r="4.5" fill="#f1d2a5"/>
<circle cx="1315" cy="395.5" r="5.5" fill="#f1d2a5"/>
<circle cx="1299.5" cy="663.5" r="4" fill="#f1d2a5"/>
<circle cx="1309.5" cy="691" r="3" fill="#f1d2a5"/>
<circle cx="1427.2" cy="538.8" r="3.6" fill="#f1d2a5"/>
</g>
<g fill="none" stroke="#3df0ee" stroke-width="1" shape-rendering="crispEdges">
<rect x="390.500" y="237.500" width="986" height="649"/>
<rect x="463.500" y="333.500" width="839" height="504"/>
</g>
<g stroke="#3df0ee" stroke-width="1"><path d="M880,560l4,4m0,-4l-4,4M880,583l4,4m0,-4l-4,4"/></g>
<g stroke="#111" stroke-width="3" stroke-linecap="round" stroke-dasharray="8.900 12.100" stroke-dashoffset="4.450">
<path d="M546,333.500 V837.500"/>
<path d="M699.5,333.500 V837.500"/>
<path d="M853,333.500 V837.500"/>
<path d="M1006.5,333.500 V837.500"/>
<path d="M1160,333.500 V837.500"/>
</g>
<g stroke="#0b8a4c" stroke-width="1" shape-rendering="crispEdges">
<path d="M546.5,332 V839"/><rect x="544.5" y="331" width="4" height="3" fill="#0b8a4c" stroke="none"/><rect x="544.5" y="836" width="4" height="3" fill="#0b8a4c" stroke="none"/>
<path d="M1160.5,332 V839"/><rect x="1158.5" y="331" width="4" height="3" fill="#0b8a4c" stroke="none"/><rect x="1158.5" y="836" width="4" height="3" fill="#0b8a4c" stroke="none"/>
</g>
<g fill="none" shape-rendering="crispEdges"><rect x="260.500" y="121.500" width="1246" height="881" stroke="#000"/><rect x="252.500" y="113.500" width="1262" height="898" stroke="#f00"/></g>
</svg>
<div class="a" style="left:2px;top:68px;width:63px;height:967px;background:#636363"></div>
<div class="a" style="left:1px;top:36px;width:4px;height:999px;background:#d6d6d6;border-right:1px solid #555"></div>
<div class="a" style="left:5px;top:68px;width:60px;height:12px;background:linear-gradient(#545454,#3a3a3a);border-bottom:1px solid #222"></div>
<svg style="left:8px;top:71px" width="10" height="8"><path d="M4 0.500v6L0.500 3.500zM8.500 0.500v6L5 3.500z" fill="#ddd"/></svg>
<div class="a" style="left:5px;top:80px;width:60px;height:481px;background:#d6d6d6;border-right:1px solid #8a8a8a;border-top:1px solid #eee"></div>
<div class="a" style="left:9px;top:84px;width:52px;height:4px;background:repeating-linear-gradient(90deg,#aaa 0 1px,transparent 1px 2px);opacity:.8"></div>
<div class="a" style="left:8px;top:140px;width:53px;height:2px;border-top:1px solid #a8a8a8;border-bottom:1px solid #ececec"></div>
<div class="a" style="left:8px;top:229px;width:53px;height:2px;border-top:1px solid #a8a8a8;border-bottom:1px solid #ececec"></div>
<div class="a" style="left:8px;top:295px;width:53px;height:2px;border-top:1px solid #a8a8a8;border-bottom:1px solid #ececec"></div>
<div class="a" style="left:8px;top:341px;width:53px;height:2px;border-top:1px solid #a8a8a8;border-bottom:1px solid #ececec"></div>
<div class="a" style="left:8px;top:367px;width:53px;height:2px;border-top:1px solid #a8a8a8;border-bottom:1px solid #ececec"></div>
<div class="a" style="left:8px;top:412px;width:53px;height:2px;border-top:1px solid #a8a8a8;border-bottom:1px solid #ececec"></div>
<div class="a" style="left:8px;top:511px;width:53px;height:2px;border-top:1px solid #a8a8a8;border-bottom:1px solid #ececec"></div>
<div class="a" style="left:8px;top:533px;width:53px;height:2px;border-top:1px solid #a8a8a8;border-bottom:1px solid #ececec"></div>
<svg style="left:12.0px;top:98.0px" width="20" height="20" viewBox="0 0 20 20"><path d="M6 2v14l3.500 -3.300l2.500 5.300l2.300 -1l-2.500 -5.200h4.700z" fill="#111"/></svg>
<svg style="left:36.0px;top:98.0px" width="20" height="20" viewBox="0 0 20 20"><path d="M6 2v13l3.300 -3l2.400 5l2 -0.900l-2.400 -5h4.500z" fill="#fff" stroke="#111" stroke-width="1.200"/><path d="M19 16v3h-3z" fill="#222"/></svg>
<svg style="left:12.0px;top:119.0px" width="20" height="20" viewBox="0 0 20 20"><path d="M7 7l9 10" stroke="#222" stroke-width="2"/><path d="M7 1v4M7 9v4M1 7h4M9 7h4M3 3l2.500 2.500M11 3l-2.500 2.500M3 11l2.500 -2.500" stroke="#555" stroke-width="1"/></svg>
<svg style="left:36.0px;top:119.0px" width="20" height="20" viewBox="0 0 20 20"><ellipse cx="10" cy="7" rx="7.500" ry="4.500" fill="none" stroke="#333" stroke-width="1.500"/><path d="M5 10c-2 2 -1 5 1 5s2 -2 0 -3" fill="none" stroke="#333" stroke-width="1.300"/><path d="M10 8v9l2.500 -2.300l2 3.500l1.500 -0.800l-2 -3.400h3z" fill="#fff" stroke="#111"/></svg>
<svg style="left:12.0px;top:144.0px" width="20" height="20" viewBox="0 0 20 20"><path d="M10 1l4 8l-2.500 6h-3l-2.500 -6z" fill="#eee" stroke="#222" stroke-width="1.300"/><path d="M10 3v7" stroke="#222"/><circle cx="10" cy="10.500" r="1.200" fill="#222"/><rect x="7" y="15.500" width="6" height="3" fill="#222"/><path d="M19 16v3h-3z" fill="#222"/></svg>
<div class="t b" style="left:40.500px;top:143px;font-family:'Liberation Serif',serif;font-size:19.500px;line-height:24px;height:24px;color:#111">T</div>
<svg style="left:55px;top:160px" width="4" height="4"><path d="M4 0v4h-4z" fill="#222"/></svg>
<svg style="left:12.0px;top:165.0px" width="20" height="20" viewBox="0 0 20 20"><path d="M3 2l14 15" stroke="#111" stroke-width="1.600"/><path d="M19 16v3h-3z" fill="#222"/></svg>
<svg style="left:36.0px;top:165.0px" width="20" height="20" viewBox="0 0 20 20"><defs><radialGradient id="eg" cx="0.4" cy="0.3" r="0.8"><stop offset="0" stop-color="#fff"/><stop offset="1" stop-color="#777"/></radialGradient></defs><ellipse cx="10" cy="9.500" rx="7" ry="5.500" fill="url(#eg)" stroke="#444"/><path d="M19 16v3h-3z" fill="#222"/></svg>
<svg style="left:12.0px;top:186.0px" width="20" height="20" viewBox="0 0 20 20"><path d="M16 2l2 2l-8 9l-3 -2z" fill="#bbb" stroke="#333"/><path d="M7 11l3 2c-1 4 -5 5 -8 4c3 -1 3 -4 5 -6z" fill="#444"/><path d="M19 16v3h-3z" fill="#222"/></svg>
<svg style="left:36.0px;top:186.0px" width="20" height="20" viewBox="0 0 20 20"><path d="M14 2l3 3l-10 10l-4 1.500l1.200 -4.200z" fill="#e6e6e6" stroke="#222" stroke-width="1.200"/><path d="M12 4l3 3" stroke="#222"/><path d="M3 16.500l1 -3l2 2z" fill="#222"/><path d="M19 16v3h-3z" fill="#222"/></svg>
<svg style="left:12.0px;top:207.0px" width="20" height="20" viewBox="0 0 20 20"><path d="M16 1l2 2l-7 8l-3 -1z" fill="#bbb" stroke="#333"/><rect x="2.500" y="7.500" width="11" height="8" fill="#e8e8e8" stroke="#222" stroke-width="1.200"/><path d="M4 17h8l3 -3" fill="none" stroke="#333"/><path d="M8 10l3 1c-1 3 -3 4 -6 3c2 -1 2 -3 3 -4z" fill="#444"/><path d="M19 16v3h-3z" fill="#222"/></svg>
<svg style="left:36.0px;top:207.0px" width="20" height="20" viewBox="0 0 20 20"><path d="M3 12l9 -7h6l-9 7z" fill="#f4f4f4" stroke="#333"/><path d="M3 12h6v4h-6z" fill="#ddd" stroke="#333"/><path d="M9 12l9 -7v4l-9 7z" fill="#aaa" stroke="#333"/><path d="M19 16v3h-3z" fill="#222"/></svg>
<svg style="left:12.0px;top:232.0px" width="20" height="20" viewBox="0 0 20 20"><circle cx="10" cy="10" r="6.500" fill="none" stroke="#222" stroke-width="1.300" stroke-dasharray="2 1.600"/><path d="M4 3l1 5l4 -2.500z" fill="#222"/><path d="M19 16v3h-3z" fill="#222"/></svg>
<svg style="left:36.0px;top:232.0px" width="20" height="20" viewBox="0 0 20 20"><rect x="2.500" y="3.500" width="11" height="8" fill="#eee" stroke="#222" stroke-width="1.200"/><rect x="11.500" y="10.500" width="6" height="6" fill="#bbb" stroke="#555"/><path d="M5 5.500l6 5M5 5.500h3.500M5 5.500v3" stroke="#222" stroke-width="1.200" fill="none"/><path d="M19 16v3h-3z" fill="#222"/></svg>
<svg style="left:12.0px;top:253.0px" width="20" height="20" viewBox="0 0 20 20"><path d="M2 8c3 -4 5 -3 7 1s5 6 9 3" fill="none" stroke="#555" stroke-width="3"/><path d="M5 5l10 11" stroke="#222"/><circle cx="10" cy="10.500" r="2" fill="#fff" stroke="#222"/><circle cx="16" cy="16.500" r="1.500" fill="#fff" stroke="#222"/><path d="M19 16v3h-3z" fill="#222"/></svg>
<svg style="left:36.0px;top:253.0px" width="20" height="20" viewBox="0 0 20 20"><rect x="4.500" y="4.500" width="12" height="11" fill="none" stroke="#222" stroke-dasharray="2.500 2" stroke-width="1.600"/><path d="M2 3v12l3 -2.800l2.200 4.500l2 -1l-2.200 -4.400h4.200z" fill="#222"/></svg>
<svg style="left:12.0px;top:273.0px" width="20" height="20" viewBox="0 0 20 20"><ellipse cx="8" cy="7.500" rx="6" ry="4.500" fill="#ddd" stroke="#333" stroke-width="1.200"/><circle cx="5.500" cy="7" r="0.900" fill="#222"/><circle cx="8.500" cy="7" r="0.900" fill="#222"/><path d="M10 8v10l2.500 -2.300l2 4l1.600 -0.800l-2 -3.900h3.400z" fill="#fff" stroke="#111"/><path d="M19 16v3h-3z" fill="#222"/></svg>
<svg style="left:36.0px;top:273.0px" width="20" height="20" viewBox="0 0 20 20"><path d="M3 2v15h15M3 7l6 2v8M3 12l6 1M6 3v14M3 2l6 3.500v4M9 11h8M9 14h8M12 10v7M15 11v6" fill="none" stroke="#444" stroke-width="1.100"/><path d="M19 16v3h-3z" fill="#222"/></svg>
<svg style="left:12.0px;top:297.0px" width="20" height="20" viewBox="0 0 20 20"><rect x="2.500" y="3.500" width="15" height="12" fill="#e6e6e6" stroke="#222" stroke-width="1.200"/><path d="M2 10c5 -4 10 4 16 -1M9 3c-3 5 4 8 1 13M3 15l8 -8M17 15l-6 -8" fill="none" stroke="#333"/></svg>
<svg style="left:36.0px;top:297.0px" width="20" height="20" viewBox="0 0 20 20"><defs><linearGradient id="gg" x1="0" x2="1"><stop offset="0" stop-color="#fff"/><stop offset="1" stop-color="#111"/></linearGradient></defs><rect x="2.500" y="3.500" width="15" height="12" fill="url(#gg)" stroke="#333"/></svg>
<svg style="left:12.0px;top:317.0px" width="20" height="20" viewBox="0 0 20 20"><path d="M17 2c1.500 1.500 1 3 -0.500 4l-2 2l-2.500 -2.500l2 -2c1 -1.500 2 -2.500 3 -1.500z" fill="#222"/><path d="M12.500 6.500l2 2l-8 8l-3.500 1.500l1.500 -3.500z" fill="#eee" stroke="#222" stroke-width="1.200"/><path d="M19 16v3h-3z" fill="#222"/></svg>
<div class="a" style="left:35px;top:316px;width:24px;height:23px;border:1px solid #666;border-radius:4px;background:linear-gradient(#bdbdbd,#cfcfcf);box-shadow:inset 0 1px 2px #8a8a8a"></div>
<svg style="left:37.0px;top:318.0px" width="20" height="20" viewBox="0 0 20 20"><rect x="2.500" y="2.500" width="7" height="6" fill="#ddd" stroke="#555"/><circle cx="14.500" cy="14" r="3.500" fill="#ddd" stroke="#444"/><path d="M9 6l2 2M10.500 9.500l1.500 1.500M8 9l1 1M12 7l1 1M11 4l1 1" stroke="#666" stroke-width="1.400"/></svg>
<svg style="left:12.0px;top:345.0px" width="20" height="20" viewBox="0 0 20 20"><rect x="7.500" y="6.500" width="9" height="11" rx="1" fill="#e0e0e0" stroke="#222" stroke-width="1.200"/><rect x="9.500" y="3.500" width="5" height="3" fill="#999" stroke="#222"/><circle cx="12" cy="12" r="2.200" fill="none" stroke="#222"/><path d="M2 3h1M5 2h1M4 5h1M2 7h1M6 4h1" stroke="#222" stroke-width="1.400"/><path d="M19 16v3h-3z" fill="#222"/></svg>
<svg style="left:36.0px;top:345.0px" width="20" height="20" viewBox="0 0 20 20"><path d="M2.500 2v15.500h15" fill="none" stroke="#222" stroke-width="1.200"/><rect x="4.500" y="8.500" width="3" height="9" fill="#888" stroke="#222"/><rect x="8.500" y="10.500" width="3" height="7" fill="#ccc" stroke="#222"/><rect x="12.500" y="5.500" width="3" height="12" fill="#888" stroke="#222"/><path d="M19 16v3h-3z" fill="#222"/></svg>
<svg style="left:12.0px;top:370.0px" width="20" height="20" viewBox="0 0 20 20"><rect x="4.500" y="4.500" width="11" height="11" fill="#e8e8e8" stroke="#222" stroke-width="1.200"/><path d="M1 4.500h3M16 4.500h3M1 15.500h3M16 15.500h3M4.500 1v3M15.500 1v3M4.500 16v3M15.500 16v3" stroke="#222" stroke-width="1.100"/></svg>
<svg style="left:36.0px;top:370.0px" width="20" height="20" viewBox="0 0 20 20"><path d="M17 2l-9 9l2 2z" fill="#999" stroke="#222"/><path d="M9 10l-6 7l8 -5z" fill="#333"/><path d="M12 3l4 4" stroke="#222"/><path d="M19 16v3h-3z" fill="#222"/></svg>
<svg style="left:12.0px;top:391.0px" width="20" height="20" viewBox="0 0 20 20"><path d="M5 10v-5c0 -1.500 2 -1.500 2 0v-1.500c0 -1.500 2 -1.500 2 0v0.500c0 -1.500 2 -1.500 2 0v1.500c0 -1.500 2 -1.500 2 0v7c0 4 -2 5 -5 5c-3 0 -4 -2 -6 -6c-0.800 -1.500 1 -2.500 2 -1z" fill="#fff" stroke="#222" stroke-width="1.200"/><path d="M19 16v3h-3z" fill="#222"/></svg>
<svg style="left:36.0px;top:391.0px" width="20" height="20" viewBox="0 0 20 20"><circle cx="8" cy="8" r="5" fill="#f2f2f2" stroke="#222" stroke-width="1.500"/><path d="M11.500 11.500l6 6" stroke="#222" stroke-width="2.500"/></svg>
<svg style="left:12.0px;top:416.0px" width="20" height="20" viewBox="0 0 20 20"><path d="M3 15l10 -11c1.500 -1.500 4 1 2.500 2.500l-10 11c-1.500 1.500 -4 -1 -2.500 -2.500z" fill="#fff" stroke="#222" stroke-width="1.300"/><path d="M11.500 5.500l3 3" stroke="#222"/></svg>
<svg style="left:13px;top:444px" width="30" height="29"><rect x="0.500" y="0.500" width="28" height="27" fill="#fff" stroke="#333"/><path d="M1 27.500L28.500 1" stroke="#e0001a" stroke-width="2.200"/></svg>
<svg style="left:27px;top:457px" width="31" height="31"><rect x="0" y="0" width="30" height="30" fill="#fff"/><rect x="1" y="1" width="28" height="28" fill="#000"/><rect x="7.500" y="7.500" width="15" height="15" fill="#000" stroke="#fff"/><rect x="10" y="10" width="10" height="10" fill="#d6d6d6" stroke="#fff" stroke-width="1.200"/></svg>
<svg style="left:46px;top:442px" width="14" height="14"><path d="M2 4c3 -3 7 -2 8 2M12 10c-3 3 -7 2 -8 -2" fill="none" stroke="#222" stroke-width="1.300"/><path d="M8 7l4 -0.500l-1 -4zM6 7l-4 0.500l1 4z" fill="#222"/></svg>
<svg style="left:13px;top:476px" width="12" height="12"><rect x="0.500" y="0.500" width="7" height="7" fill="#fff" stroke="#222"/><rect x="4" y="4" width="7" height="7" fill="#222"/><rect x="6" y="6" width="3" height="3" fill="#fff"/></svg>
<div class="a" style="left:9px;top:494px;width:17px;height:16px;border:1px solid #555;border-radius:3px;background:#bdbdbd"></div>
<svg style="left:12px;top:497px" width="11" height="11"><rect x="0" y="0" width="11" height="11" fill="#111"/><rect x="3.500" y="3.500" width="4" height="4" fill="#ccc"/></svg>
<div class="a" style="left:28px;top:496px;width:12px;height:12px;background:linear-gradient(90deg,#fff,#333);border:1px solid #999"></div>
<svg style="left:45px;top:496px" width="12" height="12"><rect x="0.500" y="0.500" width="11" height="11" fill="#fff" stroke="#999"/><path d="M1 11L11 1" stroke="#e0001a" stroke-width="2"/></svg>
<div class="a" style="left:9px;top:514px;width:18px;height:17px;border:1px solid #555;border-radius:3px;background:#bdbdbd"></div>
<svg style="left:11px;top:516px" width="14" height="14"><circle cx="6" cy="6" r="5" fill="#eee" stroke="#222" stroke-width="1.200"/><rect x="7.500" y="7.500" width="6" height="6" fill="#999" stroke="#222"/></svg>
<svg style="left:27px;top:516px" width="14" height="14"><rect x="7.500" y="7.500" width="6" height="6" fill="#999" stroke="#222"/><circle cx="6" cy="6" r="5" fill="#eee" stroke="#222" stroke-width="1.200"/></svg>
<svg style="left:45px;top:517px" width="12" height="12"><circle cx="6" cy="6" r="5" fill="#f2f2f2" stroke="#aaa"/><path d="M6 6h5a5 5 0 0 1 -5 5z" fill="#bbb"/></svg>
<svg style="left:23px;top:538px" width="24" height="16"><rect x="8.500" y="0.500" width="14" height="9" fill="#fafafa" stroke="#555"/><rect x="0.500" y="5.500" width="14" height="9" fill="#f4f4f4" stroke="#555"/></svg>
<div class="red" style="left:3px;top:93px;width:34px;height:27.500px;border-width:5px;border-radius:2px"></div>
<div class="red" style="left:1px;top:162px;width:39px;height:27px;border-width:5px"></div>
<div class="red" style="left:29px;top:311px;width:37px;height:34px;border-width:5px"></div>
<div class="red" style="left:4px;top:435px;width:61px;height:61px;border-width:5px"></div>
<div class="a" style="left:241px;top:128px;width:406px;height:147px;border-radius:7px;border:1px solid #2b2530;background:linear-gradient(100deg,#a8969f 0%,#917e8a 12%,#6a5463 30%,#574053 45%,#5d475a 60%,#7d6b78 75%,#9c8a94 88%,#8a7884 100%);box-shadow:0 1px 5px 1px rgba(0,0,0,.55),0 5px 16px 4px rgba(0,0,0,.5),inset 0 0 0 1px rgba(255,255,255,.55)"></div>
<div class="a" style="left:243px;top:158px;width:402px;height:115px;background:linear-gradient(180deg,#9a8a92,#7d6a76 50%,#8f7f88);border-radius:0 0 5px 5px"></div>
<div class="a" style="left:244px;top:133px;width:135px;height:20px;border-radius:10px;background:rgba(255,255,255,.5);filter:blur(5px)"></div>
<div class="t" style="left:247.5px;top:136px;font-size:12px;letter-spacing:0.25px;color:#000;line-height:15px;height:15px">Angleichung-Optionen</div>
<div class="a" style="left:247px;top:157px;width:394px;height:112px;background:#f0f0f0;border:1px solid #6d6470;box-shadow:0 0 0 1px rgba(255,255,255,.55)"></div>
<div class="t" style="left:282.5px;top:176px;font-size:11.5px;letter-spacing:-0.16px;">Abstand:</div>
<div class="a" style="left:331px;top:173px;width:132px;height:20px;background:#fff;border:1px solid #e2e3ea;border-top-color:#abadb3;border-radius:1px"></div>
<div class="t" style="left:334px;top:176px;font-size:11.5px;letter-spacing:-0.09px;">Festgelegte Stufen</div>
<svg style="left:449px;top:181px" width="9" height="6"><path d="M0.500 0.500h8l-4 4.500z" fill="#111"/></svg>
<div class="a" style="left:473px;top:173px;width:56px;height:20px;background:#fff;border:1px solid #b5cfe7;border-top-color:#5794bf;border-radius:2px"></div>
<div class="t" style="left:478px;top:176px;font-size:11.5px;">3</div>
<div class="a" style="left:485px;top:176px;width:1px;height:14px;background:#000"></div>
<div class="a" style="left:545px;top:174px;width:78px;height:18px;border:1px solid #707070;border-radius:3px;background:linear-gradient(#f5f5f5,#ebebeb 48%,#dddddd 52%,#cfcfcf);box-shadow:inset 0 0 0 1px rgba(255,255,255,.7)"></div><div class="t" style="left:575.5px;top:176px;font-size:11.5px;letter-spacing:-0.12px;">OK</div>
<div class="a" style="left:545px;top:204px;width:78px;height:18px;border:1px solid #707070;border-radius:3px;background:linear-gradient(#f5f5f5,#ebebeb 48%,#dddddd 52%,#cfcfcf);box-shadow:inset 0 0 0 1px rgba(255,255,255,.7)"></div><div class="t" style="left:555.5px;top:206px;font-size:11.5px;letter-spacing:0.02px;">Abbrechen</div>
<div class="t" style="left:262px;top:207px;font-size:11.5px;letter-spacing:0.08px;">Ausrichtung:</div>
<div class="a" style="left:332px;top:204px;width:38px;height:20px;border:1px solid #555;border-radius:3px;background:linear-gradient(#c9c9c9,#dedede);box-shadow:inset 0 1px 2px rgba(0,0,0,.35)"></div>
<svg style="left:334px;top:206px" width="34" height="16"><path d="M2 12c8 -8 22 -8 30 0" fill="none" stroke="#333" stroke-width="1.300"/><path d="M2 7v8M7 4v7M12 2v7M17 1.500v7M22 2v7M27 4v7M32 7v8" stroke="#222" stroke-width="1.400"/></svg>
<div class="a" style="left:382px;top:204px;width:38px;height:20px;border:1px solid #9a9a9a;border-radius:3px;background:linear-gradient(#f4f4f4,#dcdcdc)"></div>
<svg style="left:384px;top:206px" width="34" height="16"><path d="M3 12c8 -8 20 -8 28 0" fill="none" stroke="#333" stroke-width="1.300"/><path d="M2 8l5 6M7 4l3.500 6.500M12.500 2l2 7M17 1.500v7M21.500 2l-2 7M27 4l-3.500 6.500M32 8l-5 6" stroke="#222" stroke-width="1.800"/></svg>
<div class="a" style="left:550px;top:240px;width:13px;height:13px;border:1px solid #8e8f8f;background:linear-gradient(135deg,#dcdcdc,#fff);box-shadow:inset 0 0 0 1px #f4f4f4"></div>
<div class="t" style="left:565px;top:240px;font-size:11.5px;letter-spacing:0.26px;">Vorschau</div>
<div class="red" style="left:278px;top:166px;width:261px;height:35px;border-width:5px"></div>
<div class="a" style="left:1700px;top:68px;width:215px;height:967px;background:#d6d6d6;border-left:1px solid #555"></div>
<div class="a" style="left:1700px;top:68px;width:215px;height:13px;background:linear-gradient(#585858,#3c3c3c)"></div>
<svg style="left:1904px;top:72px" width="9" height="7"><path d="M0.500 0.500v6L4 3.500zM5 0.500v6L8.500 3.500z" fill="#ddd"/></svg>
<div class="tabrow" style="left:1700px;top:81px;width:215px"></div><div class="tab on" style="left:1701px;top:81px;width:48px;padding-left:0"><svg style="left:4px;top:4px" width="7" height="10"><path d="M1 4L3.500 1L6 4zM1 6L3.500 9L6 6z" fill="#222"/></svg></div><div class="t" style="left:1713.0px;top:82px;font-size:10.5px;letter-spacing:-0.65px;font-weight:bold;color:#1a1a1a;line-height:15px;height:15px">Farbe</div><div class="tab" style="left:1749px;top:81px;width:62px;padding-left:0"></div><div class="t" style="left:1756.9px;top:82px;font-size:10.5px;letter-spacing:-0.39px;font-weight:bold;color:#1a1a1a;line-height:15px;height:15px">Farbfelder</div><div class="tab" style="left:1811px;top:81px;width:57px;padding-left:0"></div><div class="t" style="left:1819.0px;top:82px;font-size:10.5px;letter-spacing:-0.34px;font-weight:bold;color:#1a1a1a;line-height:15px;height:15px">Farbhilfe</div><svg style="left:1898px;top:86px" width="14" height="9"><path d="M0 2.500h4l-2 2.500z" fill="#222"/><path d="M5.500 1.500h8M5.500 4.500h8M5.500 7.500h8" stroke="#222"/></svg>
<svg style="left:1704px;top:104px" width="31" height="30"><rect x="0.500" y="0.500" width="19" height="18" fill="#fff" stroke="#333"/><path d="M1 18L19 1" stroke="#e0001a" stroke-width="2"/><rect x="10.500" y="9.500" width="20" height="20" fill="#000" stroke="#fff"/><rect x="16.500" y="15.500" width="8" height="8" fill="#d6d6d6" stroke="#fff"/></svg>
<div class="t" style="left:1744px;top:103px;font-size:10.5px;">C</div>
<div class="a" style="left:1757px;top:105px;width:101px;height:8px;background:linear-gradient(90deg,#3a1410,#000 85%);border:1px solid #eee;border-top-color:#777;border-left-color:#999"></div>
<svg style="left:1843px;top:112px" width="10" height="6"><path d="M0.500 5.500L5 0.500L9.500 5.500z" fill="#e4e4e4" stroke="#555" stroke-width="0.900"/></svg>
<div class="a" style="left:1863px;top:102px;width:34px;height:16px;background:#fff;border:1px solid #e4e4e4;border-top-color:#c8c8c8"></div>
<div class="t" style="left:1868.5px;top:103px;font-size:10px;letter-spacing:-0.26px;">91,25</div>
<div class="t" style="left:1899px;top:103px;font-size:10px;">%</div>
<div class="t" style="left:1744px;top:121px;font-size:10.5px;">M</div>
<div class="a" style="left:1757px;top:123px;width:101px;height:8px;background:linear-gradient(90deg,#0f3a2e,#000 85%);border:1px solid #eee;border-top-color:#777;border-left-color:#999"></div>
<svg style="left:1831px;top:130px" width="10" height="6"><path d="M0.500 5.500L5 0.500L9.500 5.500z" fill="#e4e4e4" stroke="#555" stroke-width="0.900"/></svg>
<div class="a" style="left:1863px;top:120px;width:34px;height:16px;background:#fff;border:1px solid #e4e4e4;border-top-color:#c8c8c8"></div>
<div class="t" style="left:1868.5px;top:121px;font-size:10px;letter-spacing:-0.26px;">78,76</div>
<div class="t" style="left:1899px;top:121px;font-size:10px;">%</div>
<div class="t" style="left:1744px;top:139px;font-size:10.5px;">Y</div>
<div class="a" style="left:1757px;top:141px;width:101px;height:8px;background:linear-gradient(90deg,#10103a,#000 85%);border:1px solid #eee;border-top-color:#777;border-left-color:#999"></div>
<svg style="left:1814.5px;top:148px" width="10" height="6"><path d="M0.500 5.500L5 0.500L9.500 5.500z" fill="#e4e4e4" stroke="#555" stroke-width="0.900"/></svg>
<div class="a" style="left:1863px;top:138px;width:34px;height:16px;background:#fff;border:1px solid #e4e4e4;border-top-color:#c8c8c8"></div>
<div class="t" style="left:1868.5px;top:139px;font-size:10px;letter-spacing:-0.26px;">61,98</div>
<div class="t" style="left:1899px;top:139px;font-size:10px;">%</div>
<div class="t" style="left:1744px;top:157px;font-size:10.5px;">K</div>
<div class="a" style="left:1757px;top:159px;width:101px;height:8px;background:linear-gradient(90deg,#50566e,#000 85%);border:1px solid #eee;border-top-color:#777;border-left-color:#999"></div>
<svg style="left:1849.5px;top:166px" width="10" height="6"><path d="M0.500 5.500L5 0.500L9.500 5.500z" fill="#e4e4e4" stroke="#555" stroke-width="0.900"/></svg>
<div class="a" style="left:1863px;top:156px;width:34px;height:16px;background:#fff;border:1px solid #e4e4e4;border-top-color:#c8c8c8"></div>
<div class="t" style="left:1868.5px;top:157px;font-size:10px;letter-spacing:-0.26px;">97,47</div>
<div class="t" style="left:1899px;top:157px;font-size:10px;">%</div>
<div class="a" style="left:1705px;top:174px;width:202px;height:17px;border:1px solid #f0f0f0;border-top-color:#666;border-left-color:#888;background:#000"></div>
<div class="a" style="left:1722px;top:175px;width:168px;height:15px;background:linear-gradient(90deg,#e31b23 0%,#f6ea14 17%,#21a84a 33%,#35c4f0 50%,#2a3a95 66%,#d3228e 84%,#e31b23 100%)"></div>
<div class="a" style="left:1722px;top:175px;width:168px;height:15px;background:linear-gradient(180deg,rgba(255,255,255,.85) 0%,rgba(255,255,255,0) 45%,rgba(0,0,0,0) 55%,rgba(0,0,0,.9) 100%)"></div>
<svg style="left:1706px;top:175px" width="16" height="15"><rect width="16" height="15" fill="#fff"/><path d="M0.500 14.500L15.500 0.500" stroke="#e0001a" stroke-width="2"/></svg>
<div class="a" style="left:1890px;top:175px;width:16px;height:8px;background:#fff"></div>
<div class="a" style="left:1890px;top:183px;width:16px;height:7px;background:#000"></div>
<div class="sep" style="left:1700px;top:198px;width:215px;height:4px;background:#4a4a4a"></div>
<div class="tabrow" style="left:1700px;top:202px;width:215px"></div><div class="tab on" style="left:1701px;top:202px;width:42px;padding-left:0"></div><div class="t" style="left:1707.9px;top:203px;font-size:10.5px;letter-spacing:-0.73px;font-weight:bold;color:#1a1a1a;line-height:15px;height:15px">Pinsel</div><div class="tab" style="left:1743px;top:202px;width:55px;padding-left:0"></div><div class="t" style="left:1748.8px;top:203px;font-size:10.5px;letter-spacing:-0.43px;font-weight:bold;color:#1a1a1a;line-height:15px;height:15px">Symbole</div><div class="tab" style="left:1798px;top:202px;width:64px;padding-left:0"></div><div class="t" style="left:1804.8px;top:203px;font-size:10.5px;letter-spacing:-0.22px;font-weight:bold;color:#1a1a1a;line-height:15px;height:15px">Grafikstile</div><svg style="left:1898px;top:207px" width="14" height="9"><path d="M0 2.500h4l-2 2.500z" fill="#222"/><path d="M5.500 1.500h8M5.500 4.500h8M5.500 7.500h8" stroke="#222"/></svg>
<div class="a" style="left:1702px;top:220px;width:196px;height:206px;background:#fff;overflow:hidden"></div>
<svg style="left:1702px;top:220px" width="196" height="206"><g stroke="#000" stroke-width="1" shape-rendering="crispEdges"><path d="M0 0.500h193M192.500 0v32"/><path d="M32.5 0v32"/><path d="M32.5 160v5M32.5 188v8"/><path d="M64.5 0v32"/><path d="M64.5 160v5M64.5 188v8"/><path d="M96.5 0v32"/><path d="M96.5 160v5M96.5 188v8"/><path d="M128.5 0v32"/><path d="M128.5 160v5M128.5 188v8"/><path d="M160.5 0v32"/><path d="M160.5 160v5M160.5 188v8"/><path d="M0 32.5h196"/><path d="M0 64.5h196"/><path d="M0 96.5h196"/><path d="M0 128.5h196"/><path d="M0 160.5h196"/><path d="M0 192.5h196"/></g><circle cx="15" cy="16" r="0.800" fill="#000"/><ellipse cx="47" cy="16" rx="2.300" ry="1.400" transform="rotate(20 47 16)" fill="#000"/><path d="M79.500 13v6" stroke="#bbb"/><path d="M111 14l2 2l-2 2l-2 -2z" fill="#000"/><circle cx="143" cy="16" r="3.500" fill="#000"/><circle cx="175" cy="16.500" r="7.500" fill="#000"/><path d="M6 48.500h147" stroke="#000" stroke-width="2.500"/><path d="M8 80.500c20 -1.500 50 -1 90 -1s60 -1 84 0c-30 2 -50 1.500 -90 2s-60 0 -84 -1z" fill="#111"/><path d="M8 112.500c10 -4 30 -4.500 86 -4.500s80 1 88 4c-8 3.500 -32 4.500 -88 4.500s-76 -0.500 -86 -4z" fill="#000"/><path d="M8 146c30 -2 60 -1 88 -3c6 -3 12 -5 18 -3c6 -6 22 -6 34 -3c14 -3 30 2 34 14c-8 -6 -20 -7 -30 -5c-10 3 -24 4 -36 2c-6 4 -12 3 -16 -1c-30 1 -60 1 -92 -1z" fill="#000"/><g fill="#c8202c" stroke="#3a0a0a" stroke-width="1.200"><path d="M10 196v-22q0 -4 4 -4h18v7h-13q-2 0 -2 2v17z"/><rect x="33" y="170" width="30" height="7"/><rect x="65" y="170" width="30" height="7"/><path d="M97 170h11v-10h7v17h-18z"/><rect x="130" y="170" width="30" height="7"/><path d="M161 170h10v-7l20 10.500l-20 10.500v-7h-10z"/></g><g fill="none" stroke="#3a3a3a" stroke-width="1.800" stroke-linecap="round"><path d="M2 205c2 -8 8 -10 11 -6s-3 8 -6 4M9 196c5 -3 11 0 12 5s-5 6 -7 2M3 198l5 5M16 196c4 2 8 6 10 9M20 203c2 -3 5 -3 6 0M100 205c1 -7 6 -10 11 -8s4 8 0 8s-3 -5 1 -5M108 195c5 -1 9 2 10 6M114 199c3 -2 7 -1 8 3s-3 4 -4 1M104 200l-5 4M118 204l5 -3"/></g><path d="M30 204.500h66M124 204.500h10M133 194v10M141 194v10" stroke="#777"/></svg>
<div class="t" style="left:1863px;top:261px;font-size:10px;letter-spacing:-0.03px;">Einfach</div>
<div class="a" style="left:1898px;top:220px;width:15px;height:206px;background:#ececec;border-left:1px solid #cfcfcf"></div>
<svg style="left:1901px;top:225px" width="10" height="6"><path d="M0.500 5.500L5 0.500L9.500 5.500z" fill="#444"/></svg>
<div class="a" style="left:1900px;top:238px;width:12px;height:16px;background:linear-gradient(90deg,#fafafa,#d8d8d8);border:1px solid #999;border-radius:2px"></div>
<svg style="left:1901px;top:416px" width="10" height="6"><path d="M0.500 0.500L5 5.500L9.500 0.500z" fill="#444"/></svg>
<svg style="left:1711px;top:428px" width="20" height="14"><rect x="1.500" y="2.500" width="9" height="7" fill="#eee" stroke="#333"/><rect x="4.500" y="5.500" width="9" height="7" fill="#ccc" stroke="#333"/><path d="M17 10v3h-3z" fill="#222"/></svg>
<svg style="left:1780px;top:428px" width="14" height="14"><path d="M2 2l10 10M12 2l-10 10" stroke="#aaa" stroke-width="1.600"/></svg>
<svg style="left:1805px;top:428px" width="22" height="14"><path d="M9 1l-7 11" stroke="#aaa" stroke-width="2"/><path d="M9 5h10M9 8h8M9 11h10" stroke="#aaa" stroke-width="1.300"/></svg>
<svg style="left:1846px;top:428px" width="14" height="14"><rect x="2.500" y="2.500" width="9" height="9" fill="#f4f4f4" stroke="#333"/><rect x="5" y="7" width="4" height="4" fill="#333"/></svg>
<svg style="left:1876px;top:427px" width="14" height="15"><path d="M3 5h8l-1 9h-6z" fill="#eee" stroke="#222"/><path d="M2 4.500h10M5 3h4" stroke="#222" stroke-width="1.400"/><path d="M5.500 7v5M8.500 7v5" stroke="#222"/></svg>
<svg style="left:1904px;top:433px" width="9" height="9"><g fill="#999"><rect x="6" y="0" width="1.500" height="1.500"/><rect x="3" y="3" width="1.500" height="1.500"/><rect x="6" y="3" width="1.500" height="1.500"/><rect x="0" y="6" width="1.500" height="1.500"/><rect x="3" y="6" width="1.500" height="1.500"/><rect x="6" y="6" width="1.500" height="1.500"/></g></svg>
<svg style="left:1904px;top:679px" width="9" height="9"><g fill="#999"><rect x="6" y="0" width="1.500" height="1.500"/><rect x="3" y="3" width="1.500" height="1.500"/><rect x="6" y="3" width="1.500" height="1.500"/><rect x="0" y="6" width="1.500" height="1.500"/><rect x="3" y="6" width="1.500" height="1.500"/><rect x="6" y="6" width="1.500" height="1.500"/></g></svg>
<div class="sep" style="left:1700px;top:443px;width:215px;height:4px"></div>
<div class="tabrow" style="left:1700px;top:447px;width:215px"></div><div class="tab on" style="left:1701px;top:447px;width:47px;padding-left:0"></div><div class="t" style="left:1708.3px;top:448px;font-size:10.5px;letter-spacing:-1.03px;font-weight:bold;color:#1a1a1a;line-height:15px;height:15px">Ebenen</div><div class="tab" style="left:1748px;top:447px;width:51px;padding-left:0"></div><div class="t" style="left:1755.0px;top:448px;font-size:10.5px;letter-spacing:-0.61px;font-weight:bold;color:#1a1a1a;line-height:15px;height:15px">Zeichen</div><div class="tab" style="left:1799px;top:447px;width:46px;padding-left:0"></div><div class="t" style="left:1805.8px;top:448px;font-size:10.5px;letter-spacing:-0.58px;font-weight:bold;color:#1a1a1a;line-height:15px;height:15px">Absatz</div><svg style="left:1898px;top:452px" width="14" height="9"><path d="M0 2.500h4l-2 2.500z" fill="#222"/><path d="M5.500 1.500h8M5.500 4.500h8M5.500 7.500h8" stroke="#222"/></svg>
<div class="a" style="left:1703px;top:465px;width:194px;height:181px;background:#fff;border-bottom:1px solid #000"></div>
<div class="a" style="left:1703px;top:466px;width:194px;height:20px;background:#d6d6d6;border-bottom:1px solid #9a9a9a"></div>
<div class="a" style="left:1703px;top:466px;width:40px;height:20px;background:#d6d6d6;border-bottom:1px solid #9a9a9a"></div>
<div class="a" style="left:1705px;top:468px;width:16px;height:16px;border:1px solid #eee;border-top-color:#aaa;border-left-color:#aaa"></div>
<div class="a" style="left:1722px;top:468px;width:16px;height:16px;border:1px solid #eee;border-top-color:#aaa;border-left-color:#aaa"></div>
<svg style="left:1706px;top:470px" width="14" height="12"><path d="M1 6c3 -5 9 -5 12 0c-3 4.500 -9 4.500 -12 0z" fill="#fff" stroke="#222" stroke-width="1.200"/><circle cx="7" cy="6" r="2.600" fill="#222"/><path d="M1 4c3 -4 9 -4 12 0" fill="none" stroke="#222" stroke-width="1.400"/></svg>
<div class="a" style="left:1739px;top:467px;width:3px;height:18px;background:#12a04e"></div>
<svg style="left:1750px;top:472px" width="11" height="8"><path d="M0.500 0.500h10l-5 6.500z" fill="#fff" stroke="#5577aa"/></svg>
<svg style="left:1765px;top:468px" width="15" height="16"><rect x="0.500" y="0.500" width="14" height="15" fill="#f3e2c8" stroke="#222"/><rect x="1" y="1" width="13" height="4" fill="#7484bc"/><path d="M4 6v7M6.500 6v7M9 6v7M11.500 6v7" stroke="#444" stroke-width="0.800"/></svg>
<div class="t" style="left:1784.5px;top:469px;font-size:10.5px;letter-spacing:-0.39px;">Meine Ebene</div>
<svg style="left:1873px;top:471px" width="10" height="10"><circle cx="5" cy="5" r="4" fill="#d6d6d6" stroke="#333" stroke-width="1.100"/></svg>
<div class="a" style="left:1890px;top:473px;width:5px;height:5px;background:#12a04e"></div>
<div class="a" style="left:1703px;top:486px;width:194px;height:20px;background:#fff;border-bottom:1px solid #9a9a9a"></div>
<div class="a" style="left:1778px;top:486px;width:119px;height:19px;background:#3399ff"></div>
<div class="a" style="left:1703px;top:486px;width:40px;height:20px;background:#d6d6d6;border-bottom:1px solid #9a9a9a"></div>
<div class="a" style="left:1705px;top:488px;width:16px;height:16px;border:1px solid #eee;border-top-color:#aaa;border-left-color:#aaa"></div>
<div class="a" style="left:1722px;top:488px;width:16px;height:16px;border:1px solid #eee;border-top-color:#aaa;border-left-color:#aaa"></div>
<svg style="left:1706px;top:490px" width="14" height="12"><path d="M1 6c3 -5 9 -5 12 0c-3 4.500 -9 4.500 -12 0z" fill="#fff" stroke="#222" stroke-width="1.200"/><circle cx="7" cy="6" r="2.600" fill="#222"/><path d="M1 4c3 -4 9 -4 12 0" fill="none" stroke="#222" stroke-width="1.400"/></svg>
<div class="a" style="left:1739px;top:487px;width:3px;height:18px;background:#12a04e"></div>
<svg style="left:1781px;top:488px" width="15" height="16"><rect x="0.500" y="0.500" width="14" height="15" fill="#fff" stroke="#222"/><path d="M4 3v10M6.500 3v10M9 3v10M11.500 3v10" stroke="#666" stroke-width="0.800"/></svg>
<div class="t" style="left:1799.5px;top:489px;font-size:10.5px;letter-spacing:-0.10px;font-weight:bold;color:#fff">Stundenplan...</div>
<svg style="left:1873px;top:491px" width="10" height="10"><circle cx="5" cy="5" r="4" fill="#3399ff" stroke="#333" stroke-width="1.100"/></svg>
<div class="a" style="left:1890px;top:493px;width:5px;height:5px;background:#12a04e"></div>
<div class="a" style="left:1703px;top:506px;width:194px;height:20px;background:#fff;border-bottom:1px solid #9a9a9a"></div>
<div class="a" style="left:1703px;top:506px;width:40px;height:20px;background:#d6d6d6;border-bottom:1px solid #9a9a9a"></div>
<div class="a" style="left:1705px;top:508px;width:16px;height:16px;border:1px solid #eee;border-top-color:#aaa;border-left-color:#aaa"></div>
<div class="a" style="left:1722px;top:508px;width:16px;height:16px;border:1px solid #eee;border-top-color:#aaa;border-left-color:#aaa"></div>
<svg style="left:1706px;top:510px" width="14" height="12"><path d="M1 6c3 -5 9 -5 12 0c-3 4.500 -9 4.500 -12 0z" fill="#fff" stroke="#222" stroke-width="1.200"/><circle cx="7" cy="6" r="2.600" fill="#222"/><path d="M1 4c3 -4 9 -4 12 0" fill="none" stroke="#222" stroke-width="1.400"/></svg>
<div class="a" style="left:1739px;top:507px;width:3px;height:18px;background:#12a04e"></div>
<svg style="left:1781px;top:508px" width="15" height="16"><rect x="0.500" y="0.500" width="14" height="15" fill="#fff" stroke="#222"/></svg>
<div class="t" style="left:1799.5px;top:509px;font-size:10.5px;letter-spacing:-0.25px;">innere Hilfslinie</div>
<svg style="left:1873px;top:511px" width="10" height="10"><circle cx="5" cy="5" r="4" fill="#fff" stroke="#333" stroke-width="1.100"/></svg>
<div class="a" style="left:1703px;top:526px;width:194px;height:20px;background:#fff;border-bottom:1px solid #9a9a9a"></div>
<div class="a" style="left:1703px;top:526px;width:40px;height:20px;background:#d6d6d6;border-bottom:1px solid #9a9a9a"></div>
<div class="a" style="left:1705px;top:528px;width:16px;height:16px;border:1px solid #eee;border-top-color:#aaa;border-left-color:#aaa"></div>
<div class="a" style="left:1722px;top:528px;width:16px;height:16px;border:1px solid #eee;border-top-color:#aaa;border-left-color:#aaa"></div>
<svg style="left:1706px;top:530px" width="14" height="12"><path d="M1 6c3 -5 9 -5 12 0c-3 4.500 -9 4.500 -12 0z" fill="#fff" stroke="#222" stroke-width="1.200"/><circle cx="7" cy="6" r="2.600" fill="#222"/><path d="M1 4c3 -4 9 -4 12 0" fill="none" stroke="#222" stroke-width="1.400"/></svg>
<div class="a" style="left:1739px;top:527px;width:3px;height:18px;background:#12a04e"></div>
<svg style="left:1781px;top:528px" width="15" height="16"><rect x="0.500" y="0.500" width="14" height="15" fill="#fff" stroke="#222"/><rect x="2.500" y="4.500" width="10" height="8" fill="none" stroke="#dbad6e"/></svg>
<div class="t" style="left:1799.5px;top:529px;font-size:10.5px;letter-spacing:-0.16px;">Stockrahmen</div>
<svg style="left:1873px;top:531px" width="10" height="10"><circle cx="5" cy="5" r="4" fill="#fff" stroke="#333" stroke-width="1.100"/></svg>
<div class="a" style="left:1703px;top:546px;width:194px;height:20px;background:#fff;border-bottom:1px solid #9a9a9a"></div>
<div class="a" style="left:1703px;top:546px;width:40px;height:20px;background:#d6d6d6;border-bottom:1px solid #9a9a9a"></div>
<div class="a" style="left:1705px;top:548px;width:16px;height:16px;border:1px solid #eee;border-top-color:#aaa;border-left-color:#aaa"></div>
<div class="a" style="left:1722px;top:548px;width:16px;height:16px;border:1px solid #eee;border-top-color:#aaa;border-left-color:#aaa"></div>
<svg style="left:1706px;top:550px" width="14" height="12"><path d="M1 6c3 -5 9 -5 12 0c-3 4.500 -9 4.500 -12 0z" fill="#fff" stroke="#222" stroke-width="1.200"/><circle cx="7" cy="6" r="2.600" fill="#222"/><path d="M1 4c3 -4 9 -4 12 0" fill="none" stroke="#222" stroke-width="1.400"/></svg>
<div class="a" style="left:1739px;top:547px;width:3px;height:18px;background:#12a04e"></div>
<svg style="left:1781px;top:548px" width="15" height="16"><rect x="0.500" y="0.500" width="14" height="15" fill="#fff" stroke="#222"/></svg>
<div class="t" style="left:1799.5px;top:549px;font-size:10.5px;letter-spacing:-0.21px;">&lt;Hilfslinie&gt;</div>
<svg style="left:1873px;top:551px" width="10" height="10"><circle cx="5" cy="5" r="4" fill="#fff" stroke="#333" stroke-width="1.100"/></svg>
<div class="a" style="left:1703px;top:566px;width:194px;height:20px;background:#fff;border-bottom:1px solid #9a9a9a"></div>
<div class="a" style="left:1703px;top:566px;width:40px;height:20px;background:#d6d6d6;border-bottom:1px solid #9a9a9a"></div>
<div class="a" style="left:1705px;top:568px;width:16px;height:16px;border:1px solid #eee;border-top-color:#aaa;border-left-color:#aaa"></div>
<div class="a" style="left:1722px;top:568px;width:16px;height:16px;border:1px solid #eee;border-top-color:#aaa;border-left-color:#aaa"></div>
<svg style="left:1706px;top:570px" width="14" height="12"><path d="M1 6c3 -5 9 -5 12 0c-3 4.500 -9 4.500 -12 0z" fill="#fff" stroke="#222" stroke-width="1.200"/><circle cx="7" cy="6" r="2.600" fill="#222"/><path d="M1 4c3 -4 9 -4 12 0" fill="none" stroke="#222" stroke-width="1.400"/></svg>
<div class="a" style="left:1739px;top:567px;width:3px;height:18px;background:#12a04e"></div>
<svg style="left:1781px;top:568px" width="15" height="16"><rect x="0.500" y="0.500" width="14" height="15" fill="#fff" stroke="#222"/><path d="M1 5h13v3c-3 -2 -5 1 -7 -1s-4 2 -6 0z" fill="#7484bc"/></svg>
<div class="t" style="left:1799.5px;top:569px;font-size:10.5px;letter-spacing:-0.52px;">Himmel</div>
<svg style="left:1873px;top:571px" width="10" height="10"><defs><radialGradient id="tg5" cx="0.350" cy="0.350" r="0.700"><stop offset="0" stop-color="#eee"/><stop offset="1" stop-color="#222"/></radialGradient></defs><circle cx="5" cy="5" r="4.300" fill="url(#tg5)" stroke="#222" stroke-width="0.800"/></svg>
<div class="a" style="left:1703px;top:586px;width:194px;height:20px;background:#fff;border-bottom:1px solid #9a9a9a"></div>
<div class="a" style="left:1703px;top:586px;width:40px;height:20px;background:#d6d6d6;border-bottom:1px solid #9a9a9a"></div>
<div class="a" style="left:1705px;top:588px;width:16px;height:16px;border:1px solid #eee;border-top-color:#aaa;border-left-color:#aaa"></div>
<div class="a" style="left:1722px;top:588px;width:16px;height:16px;border:1px solid #eee;border-top-color:#aaa;border-left-color:#aaa"></div>
<svg style="left:1706px;top:590px" width="14" height="12"><path d="M1 6c3 -5 9 -5 12 0c-3 4.500 -9 4.500 -12 0z" fill="#fff" stroke="#222" stroke-width="1.200"/><circle cx="7" cy="6" r="2.600" fill="#222"/><path d="M1 4c3 -4 9 -4 12 0" fill="none" stroke="#222" stroke-width="1.400"/></svg>
<div class="a" style="left:1739px;top:587px;width:3px;height:18px;background:#12a04e"></div>
<svg style="left:1781px;top:588px" width="15" height="16"><rect x="0.500" y="0.500" width="14" height="15" fill="#f0dcc0" stroke="#222"/></svg>
<div class="t" style="left:1799.5px;top:589px;font-size:10.5px;letter-spacing:0.23px;">Textur</div>
<svg style="left:1873px;top:591px" width="10" height="10"><defs><radialGradient id="tg6" cx="0.350" cy="0.350" r="0.700"><stop offset="0" stop-color="#eee"/><stop offset="1" stop-color="#222"/></radialGradient></defs><circle cx="5" cy="5" r="4.300" fill="url(#tg6)" stroke="#222" stroke-width="0.800"/></svg>
<div class="a" style="left:1703px;top:606px;width:194px;height:20px;background:#fff;border-bottom:1px solid #9a9a9a"></div>
<div class="a" style="left:1703px;top:606px;width:40px;height:20px;background:#d6d6d6;border-bottom:1px solid #9a9a9a"></div>
<div class="a" style="left:1705px;top:608px;width:16px;height:16px;border:1px solid #eee;border-top-color:#aaa;border-left-color:#aaa"></div>
<div class="a" style="left:1722px;top:608px;width:16px;height:16px;border:1px solid #eee;border-top-color:#aaa;border-left-color:#aaa"></div>
<svg style="left:1706px;top:610px" width="14" height="12"><path d="M1 6c3 -5 9 -5 12 0c-3 4.500 -9 4.500 -12 0z" fill="#fff" stroke="#222" stroke-width="1.200"/><circle cx="7" cy="6" r="2.600" fill="#222"/><path d="M1 4c3 -4 9 -4 12 0" fill="none" stroke="#222" stroke-width="1.400"/></svg>
<div class="a" style="left:1739px;top:607px;width:3px;height:18px;background:#12a04e"></div>
<svg style="left:1781px;top:608px" width="15" height="16"><rect x="0.500" y="0.500" width="14" height="15" fill="#f3e2c8" stroke="#222"/><rect x="4" y="4" width="7" height="8" fill="#fbf3ea"/></svg>
<div class="t" style="left:1799.5px;top:609px;font-size:10.5px;letter-spacing:0.03px;">&lt;Pfad&gt;</div>
<svg style="left:1873px;top:611px" width="10" height="10"><circle cx="5" cy="5" r="4" fill="#fff" stroke="#333" stroke-width="1.100"/></svg>
<div class="a" style="left:1703px;top:626px;width:194px;height:20px;background:#d6d6d6;border-bottom:1px solid #9a9a9a"></div>
<div class="a" style="left:1703px;top:626px;width:40px;height:20px;background:#d6d6d6;border-bottom:1px solid #9a9a9a"></div>
<div class="a" style="left:1705px;top:628px;width:16px;height:16px;border:1px solid #eee;border-top-color:#aaa;border-left-color:#aaa"></div>
<div class="a" style="left:1722px;top:628px;width:16px;height:16px;border:1px solid #eee;border-top-color:#aaa;border-left-color:#aaa"></div>
<div class="a" style="left:1739px;top:627px;width:3px;height:18px;background:#12a04e"></div>
<div class="t" style="left:1784.5px;top:629px;font-size:10.5px;letter-spacing:-0.14px;">Vorlage</div>
<svg style="left:1873px;top:631px" width="10" height="10"><circle cx="5" cy="5" r="4" fill="#d6d6d6" stroke="#333" stroke-width="1.100"/></svg>
<svg style="left:1889px;top:466px" width="8" height="8"><path d="M0 0h8v8z" fill="#111"/></svg>
<div class="a" style="left:1747px;top:466px;width:1px;height:180px;background:#444"></div>
<div class="a" style="left:1703px;top:646px;width:194px;height:25px;background:#d6d6d6"></div>
<div class="a" style="left:1703px;top:465px;width:194px;height:1px;background:#111"></div>
<div class="a" style="left:1703px;top:645px;width:194px;height:1px;background:#111"></div>
<div class="a" style="left:1703px;top:671px;width:194px;height:1px;background:#111"></div>
<div class="a" style="left:1897px;top:465px;width:16px;height:206px;background:#ececec;border-left:1px solid #cfcfcf"></div>
<svg style="left:1900px;top:471px" width="10" height="6"><path d="M0.500 5.500L5 0.500L9.500 5.500z" fill="#aaa"/></svg>
<svg style="left:1900px;top:660px" width="10" height="6"><path d="M0.500 0.500L5 5.500L9.500 0.500z" fill="#aaa"/></svg>
<svg style="left:1781px;top:672px" width="18" height="16"><rect x="1.500" y="2.500" width="8" height="8" fill="#ccc" stroke="#888"/><circle cx="10" cy="9" r="5" fill="#eee" stroke="#555"/><path d="M10 9v-4a4 4 0 0 1 4 4z" fill="#555"/></svg>
<svg style="left:1811px;top:673px" width="18" height="14"><path d="M1 5h6M5 2.500l3 2.500l-3 2.500" fill="none" stroke="#333" stroke-width="1.200"/><path d="M9 12.500h7.500v-8.500" fill="none" stroke="#333"/><rect x="10.500" y="7.500" width="4" height="4" fill="#eee" stroke="#333"/></svg>
<svg style="left:1844px;top:673px" width="14" height="14"><rect x="2.500" y="2.500" width="9" height="9" fill="#f4f4f4" stroke="#333"/><rect x="5" y="7" width="4" height="4" fill="#333"/></svg>
<svg style="left:1876px;top:672px" width="14" height="15"><path d="M3 5h8l-1 9h-6z" fill="#eee" stroke="#222"/><path d="M2 4.500h10M5 3h4" stroke="#222" stroke-width="1.400"/><path d="M5.500 7v5M8.500 7v5" stroke="#222"/></svg>
<div class="sep" style="left:1700px;top:689px;width:215px;height:3px"></div>
<div class="tabrow" style="left:1700px;top:692px;width:215px"></div><div class="tab on" style="left:1701px;top:692px;width:56px;padding-left:0"></div><div class="t" style="left:1708.0px;top:693px;font-size:10.5px;letter-spacing:-1.17px;font-weight:bold;color:#1a1a1a;line-height:15px;height:15px">Aussehen</div><div class="tab" style="left:1757px;top:692px;width:52px;padding-left:0"></div><div class="t" style="left:1763.5px;top:693px;font-size:10.5px;letter-spacing:0.25px;font-weight:bold;color:#1a1a1a;line-height:15px;height:15px">Verlauf</div><div class="tab" style="left:1809px;top:692px;width:66px;padding-left:0"></div><div class="t" style="left:1815.0px;top:693px;font-size:10.5px;letter-spacing:-0.56px;font-weight:bold;color:#1a1a1a;line-height:15px;height:15px">Transparenz</div><svg style="left:1898px;top:697px" width="14" height="9"><path d="M0 2.500h4l-2 2.500z" fill="#222"/><path d="M5.500 1.500h8M5.500 4.500h8M5.500 7.500h8" stroke="#222"/></svg>
<div class="a" style="left:1703px;top:710px;width:194px;height:145px;background:#d6d6d6;border-bottom:1px solid #000;border-top:1px solid #111"></div>
<div class="a" style="left:1724px;top:710px;width:1px;height:145px;background:#888"></div>
<div class="t" style="left:1727px;top:717px;font-size:10.5px;letter-spacing:-1.20px;">Pfad: Angleichen</div>
<svg style="left:1883px;top:718px" width="11" height="11"><rect x="0.500" y="0.500" width="10" height="10" fill="#fff" stroke="#222"/><path d="M1 1h3v3h-3zM7 1h3v3h-3zM4 4h3v3h-3zM1 7h3v3h-3zM7 7h3v3h-3z" fill="#555"/></svg>
<div class="a" style="left:1703px;top:736px;width:194px;height:1px;background:#bbb"></div>
<div class="a" style="left:1725px;top:760px;width:172px;height:23px;background:#3399ff"></div>
<svg style="left:1727px;top:765px" width="8" height="12"><path d="M1 1l5.500 5l-5.500 5z" fill="#3399ff" stroke="#111" stroke-width="1.200"/></svg>
<div class="t" style="left:1738px;top:764px;font-size:10.5px;letter-spacing:0.32px;color:#fff;border-bottom:1px dotted #fff;height:14px;line-height:13px">Kontur:</div>
<svg style="left:1782px;top:762px" width="18" height="19"><rect x="0" y="0" width="17" height="18" fill="#000"/><rect x="4.500" y="5.500" width="8" height="7" fill="#fff"/></svg>
<div class="a" style="left:1800px;top:762px;width:13px;height:19px;background:#d6d6d6;border:1px solid #b0b0b0"></div>
<svg style="left:1803px;top:769px" width="8" height="5"><path d="M0.500 0.500h7l-3.500 4z" fill="#444"/></svg>
<div class="inp" style="left:1814px;top:761px;width:67px;height:20px;border-color:#7aaef0"></div>
<div class="a" style="left:1815px;top:762px;width:13px;height:18px;background:#f0f0f0;border-right:1px solid #c8c8c8"></div>
<svg style="left:1816px;top:764px" width="10" height="15"><path d="M1.500 5.500L5 1.500L8.500 5.500z" fill="#6480d8" stroke="#3a55b0" stroke-width="0.500"/><path d="M1.500 9.500L5 13.500L8.500 9.500z" fill="#6480d8" stroke="#3a55b0" stroke-width="0.500"/></svg>
<div class="t" style="left:1835px;top:764px;font-size:10px;letter-spacing:-0.19px;">1,815</div>
<svg style="left:1867px;top:769px" width="9" height="6"><path d="M0.500 0.500h8l-4 4.500z" fill="#111"/></svg>
<div class="t" style="left:1882px;top:764px;font-size:10.5px;font-weight:bold;color:#fff">G...</div>
<svg style="left:1726px;top:790px" width="11" height="9"><path d="M1 1h9l-4.500 6.500z" fill="#d6d6d6" stroke="#111" stroke-width="1.300"/></svg>
<div class="t" style="left:1736.5px;top:788px;font-size:10.5px;letter-spacing:-0.16px;">Fläche:</div>
<svg style="left:1783px;top:786px" width="19" height="18"><rect x="0.500" y="0.500" width="17" height="17" fill="#d6d6d6" stroke="#111"/><rect x="2.500" y="2.500" width="13" height="13" fill="#fff" stroke="#111"/><path d="M3 15L15 3" stroke="#e0001a" stroke-width="1.800"/></svg>
<div class="a" style="left:1725px;top:807px;width:172px;height:25px;background:#fff"></div>
<div class="t" style="left:1748px;top:812px;font-size:10.5px;letter-spacing:0.22px;color:#1a1aff;border-bottom:1px dotted #1a1aff;height:14px;line-height:13px">Deckkraft:</div>
<div class="t" style="left:1802px;top:812px;font-size:10.5px;letter-spacing:-0.16px;">Standard</div>
<div class="t" style="left:1738px;top:836px;font-size:10.5px;letter-spacing:0.22px;color:#1a1aff;border-bottom:1px dotted #1a1aff;height:14px;line-height:13px">Deckkraft:</div>
<div class="t" style="left:1792px;top:836px;font-size:10.5px;letter-spacing:-0.16px;">Standard</div>
<div class="a" style="left:1705px;top:761px;width:18px;height:20px;border:1px solid #eee;border-top-color:#aaa;border-left-color:#aaa"></div>
<svg style="left:1707px;top:765px" width="14" height="12"><path d="M1 6c3 -5 9 -5 12 0c-3 4.500 -9 4.500 -12 0z" fill="#fff" stroke="#222" stroke-width="1.200"/><circle cx="7" cy="6" r="2.600" fill="#222"/><path d="M1 4c3 -4 9 -4 12 0" fill="none" stroke="#222" stroke-width="1.400"/></svg>
<div class="a" style="left:1705px;top:785px;width:18px;height:20px;border:1px solid #eee;border-top-color:#aaa;border-left-color:#aaa"></div>
<svg style="left:1707px;top:789px" width="14" height="12"><path d="M1 6c3 -5 9 -5 12 0c-3 4.500 -9 4.500 -12 0z" fill="#fff" stroke="#222" stroke-width="1.200"/><circle cx="7" cy="6" r="2.600" fill="#222"/><path d="M1 4c3 -4 9 -4 12 0" fill="none" stroke="#222" stroke-width="1.400"/></svg>
<div class="a" style="left:1705px;top:809px;width:18px;height:20px;border:1px solid #eee;border-top-color:#aaa;border-left-color:#aaa"></div>
<svg style="left:1707px;top:813px" width="14" height="12"><path d="M1 6c3 -5 9 -5 12 0c-3 4.500 -9 4.500 -12 0z" fill="#fff" stroke="#999" stroke-width="1.200"/><circle cx="7" cy="6" r="2.600" fill="#999"/><path d="M1 4c3 -4 9 -4 12 0" fill="none" stroke="#999" stroke-width="1.400"/></svg>
<div class="a" style="left:1705px;top:833px;width:18px;height:20px;border:1px solid #eee;border-top-color:#aaa;border-left-color:#aaa"></div>
<svg style="left:1707px;top:837px" width="14" height="12"><path d="M1 6c3 -5 9 -5 12 0c-3 4.500 -9 4.500 -12 0z" fill="#fff" stroke="#999" stroke-width="1.200"/><circle cx="7" cy="6" r="2.600" fill="#999"/><path d="M1 4c3 -4 9 -4 12 0" fill="none" stroke="#999" stroke-width="1.400"/></svg>
<div class="a" style="left:1897px;top:710px;width:16px;height:165px;background:#ececec;border-left:1px solid #cfcfcf"></div>
<svg style="left:1900px;top:717px" width="10" height="6"><path d="M0.500 5.500L5 0.500L9.500 5.500z" fill="#aaa"/></svg>
<svg style="left:1900px;top:865px" width="10" height="6"><path d="M0.500 0.500L5 5.500L9.500 0.500z" fill="#aaa"/></svg>
<svg style="left:1712px;top:877px" width="14" height="14"><rect x="1" y="1" width="11" height="11" fill="#555"/><rect x="4" y="4" width="5" height="5" fill="#bbb"/></svg>
<svg style="left:1746px;top:877px" width="14" height="14"><rect x="1.500" y="1.500" width="10" height="10" fill="#fff" stroke="#888"/></svg>
<div class="t" style="left:1778px;top:874px;font-size:11px;font-family:'Liberation Serif',serif;font-weight:bold;font-size:15px;line-height:16px;height:16px;color:#333"><i>fx</i></div>
<svg style="left:1792px;top:885px" width="4" height="4"><path d="M4 0v4h-4z" fill="#222"/></svg>
<svg style="left:1812px;top:878px" width="12" height="12"><circle cx="6" cy="6" r="4.500" fill="#eee" stroke="#444" stroke-width="1.300"/><path d="M3 3l6 6" stroke="#444" stroke-width="1.300"/></svg>
<svg style="left:1846px;top:877px" width="14" height="14"><rect x="2.500" y="2.500" width="9" height="9" fill="#f4f4f4" stroke="#333"/><rect x="5" y="7" width="4" height="4" fill="#333"/></svg>
<svg style="left:1876px;top:876px" width="14" height="15"><path d="M3 5h8l-1 9h-6z" fill="#eee" stroke="#222"/><path d="M2 4.500h10M5 3h4" stroke="#222" stroke-width="1.400"/><path d="M5.500 7v5M8.500 7v5" stroke="#222"/></svg>
<div class="sep" style="left:1700px;top:893px;width:215px;height:3px"></div>
<div class="tabrow" style="left:1700px;top:896px;width:215px"></div><div class="tab on" style="left:1701px;top:896px;width:73px;padding-left:0"><svg style="left:4px;top:4px" width="7" height="10"><path d="M1 4L3.500 1L6 4zM1 6L3.500 9L6 6z" fill="#222"/></svg></div><div class="t" style="left:1712.5px;top:897px;font-size:10.5px;letter-spacing:-0.44px;font-weight:bold;color:#1a1a1a;line-height:15px;height:15px">Ausrichten</div><div class="tab" style="left:1774px;top:896px;width:65px;padding-left:0"></div><div class="t" style="left:1780.9px;top:897px;font-size:10.5px;letter-spacing:-0.25px;font-weight:bold;color:#1a1a1a;line-height:15px;height:15px">Pathfinder</div><svg style="left:1898px;top:901px" width="14" height="9"><path d="M0 2.500h4l-2 2.500z" fill="#222"/><path d="M5.500 1.500h8M5.500 4.500h8M5.500 7.500h8" stroke="#222"/></svg>
<div class="t" style="left:1706px;top:917px;font-size:10.5px;letter-spacing:-0.06px;">Objekte ausrichten:</div>
<div class="t" style="left:1706px;top:955px;font-size:10.5px;letter-spacing:-0.04px;">Objekte verteilen:</div>
<div class="t" style="left:1706px;top:993px;font-size:10.5px;letter-spacing:-0.13px;">Abstand verteilen:</div>
<div class="t" style="left:1840.5px;top:995px;font-size:10.5px;letter-spacing:-0.09px;">Ausrichten an:</div>
<div class="a" style="left:1706px;top:952px;width:204px;height:2px;border-top:1px solid #a8a8a8;border-bottom:1px solid #ececec"></div>
<div class="a" style="left:1706px;top:990px;width:204px;height:2px;border-top:1px solid #a8a8a8;border-bottom:1px solid #ececec"></div>
<div class="a" style="left:1835px;top:997px;width:2px;height:28px;border-left:1px solid #a8a8a8;border-right:1px solid #ececec"></div>
<svg style="left:1711.5px;top:932px" width="18" height="16"><path d="M1.500 0v15" stroke="#222" stroke-width="1.300"/><rect x="3.500" y="2.500" width="6" height="4" fill="#ddd" stroke="#333"/><rect x="3.500" y="9.500" width="11" height="4" fill="#bbb" stroke="#333"/></svg>
<svg style="left:1746.0px;top:932px" width="18" height="16"><path d="M8.500 0v15" stroke="#222" stroke-width="1.300"/><rect x="5.500" y="2.500" width="6" height="4" fill="#ddd" stroke="#333"/><rect x="2.500" y="9.500" width="12" height="4" fill="#bbb" stroke="#333"/></svg>
<svg style="left:1780.0px;top:932px" width="18" height="16"><path d="M15.500 0v15" stroke="#222" stroke-width="1.300"/><rect x="7.500" y="2.500" width="6" height="4" fill="#ddd" stroke="#333"/><rect x="2.500" y="9.500" width="11" height="4" fill="#bbb" stroke="#333"/></svg>
<svg style="left:1813.5px;top:932px" width="18" height="16"><path d="M0 2.500h17" stroke="#222" stroke-width="1.300"/><rect x="3.500" y="4.500" width="4" height="9" fill="#bbb" stroke="#333"/><rect x="10.500" y="4.500" width="4" height="5" fill="#ddd" stroke="#333"/></svg>
<svg style="left:1848.0px;top:932px" width="18" height="16"><path d="M0 8.500h17" stroke="#222" stroke-width="1.300"/><rect x="3.500" y="3.500" width="4" height="10" fill="#bbb" stroke="#333"/><rect x="10.500" y="6.500" width="4" height="4" fill="#ddd" stroke="#333"/></svg>
<svg style="left:1882.0px;top:932px" width="18" height="16"><path d="M0 14.500h17" stroke="#222" stroke-width="1.300"/><rect x="3.500" y="3.500" width="4" height="10" fill="#bbb" stroke="#333"/><rect x="10.500" y="8.500" width="4" height="5" fill="#ddd" stroke="#333"/></svg>
<svg style="left:1711.5px;top:969px" width="18" height="16"><path d="M0 2.500h17M0 9.500h17" stroke="#222" stroke-width="1.300"/><rect x="5.500" y="3.500" width="6" height="3" fill="#ddd" stroke="#333"/><rect x="3.500" y="10.500" width="10" height="3" fill="#bbb" stroke="#333"/></svg>
<svg style="left:1746.0px;top:969px" width="18" height="16"><path d="M0 4.500h17M0 11.500h17" stroke="#222" stroke-width="1.300"/><rect x="5.500" y="2.500" width="6" height="4" fill="#ddd" stroke="#333"/><rect x="3.500" y="9.500" width="10" height="4" fill="#bbb" stroke="#333"/></svg>
<svg style="left:1780.0px;top:969px" width="18" height="16"><path d="M0 6.500h17M0 13.500h17" stroke="#222" stroke-width="1.300"/><rect x="5.500" y="2.500" width="6" height="3" fill="#ddd" stroke="#333"/><rect x="3.500" y="9.500" width="10" height="3" fill="#bbb" stroke="#333"/></svg>
<svg style="left:1813.5px;top:969px" width="18" height="16"><path d="M3.500 1v14M10.500 1v14" stroke="#222" stroke-width="1.300"/><rect x="4.500" y="3.500" width="3" height="10" fill="#bbb" stroke="#333"/><rect x="11.500" y="5.500" width="3" height="6" fill="#ddd" stroke="#333"/></svg>
<svg style="left:1848.0px;top:969px" width="18" height="16"><path d="M5.500 1v14M12.500 1v14" stroke="#222" stroke-width="1.300"/><rect x="3.500" y="3.500" width="4" height="10" fill="#bbb" stroke="#333"/><rect x="10.500" y="5.500" width="4" height="6" fill="#ddd" stroke="#333"/></svg>
<svg style="left:1882.0px;top:969px" width="18" height="16"><path d="M7.500 1v14M14.500 1v14" stroke="#222" stroke-width="1.300"/><rect x="3.500" y="3.500" width="3" height="10" fill="#bbb" stroke="#333"/><rect x="10.500" y="5.500" width="3" height="6" fill="#ddd" stroke="#333"/></svg>
<svg style="left:1711px;top:1009px" width="18" height="16"><path d="M0 6.500h17M0 9.500h17" stroke="#222" stroke-width="1.200"/><rect x="5.500" y="1.500" width="7" height="3" fill="#ccc" stroke="#333"/><rect x="7.500" y="11.500" width="4" height="3" fill="#fff" stroke="#333"/></svg>
<svg style="left:1746px;top:1009px" width="18" height="16"><path d="M6.500 0v15M9.500 0v15" stroke="#222" stroke-width="1.200"/><rect x="1.500" y="2.500" width="3" height="4" fill="#fff" stroke="#333"/><rect x="11.500" y="3.500" width="4" height="9" fill="#ccc" stroke="#333"/></svg>
<div class="a" style="left:1776px;top:1008px;width:54px;height:20px;border:1px solid #f4f4f4;border-top-color:#b0b0b0;border-left-color:#b0b0b0;background:#d8d8d8"></div>
<div class="a" style="left:1777px;top:1009px;width:14px;height:18px;border-right:1px solid #eee;background:#dcdcdc"></div>
<svg style="left:1779px;top:1011px" width="10" height="15"><path d="M1.500 5.500L5 1.500L8.500 5.500z" fill="#e6e6e6" stroke="#aaa" stroke-width="0.800"/><path d="M1.500 9.500L5 13.500L8.500 9.500z" fill="#e6e6e6" stroke="#aaa" stroke-width="0.800"/></svg>
<div class="t" style="left:1795px;top:1011px;font-size:10px;letter-spacing:0.33px;color:#999">0 mm</div>
<svg style="left:1861px;top:1009px" width="26" height="18"><rect x="1.500" y="1.500" width="12" height="14" fill="none" stroke="#222" stroke-width="1.200"/><rect x="5" y="4" width="5" height="9" fill="#ccc" stroke="#222"/><path d="M7.500 1v3M7.500 13v3M1 8.500h4M10 8.500h4" stroke="#222"/><path d="M18 7h5l-2.500 4z" fill="#222"/></svg>
<div class="a" style="left:1566px;top:491px;width:212px;height:271px;background:#d6d6d6;border:1px solid #7a7a7a;border-top-color:#555;box-shadow:1px 1px 0 #999"></div>
<div class="t" style="left:1588.5px;top:499px;font-size:10.5px;letter-spacing:-0.04px;">Stärke:</div>
<div class="inp" style="left:1624px;top:496px;width:80px;height:20px"></div>
<div class="a" style="left:1625px;top:497px;width:13px;height:18px;background:#f0f0f0;border-right:1px solid #c8c8c8"></div>
<svg style="left:1626px;top:499px" width="10" height="15"><path d="M1.500 5.500L5 1.500L8.500 5.500z" fill="#6480d8" stroke="#3a55b0" stroke-width="0.500"/><path d="M1.500 9.500L5 13.500L8.500 9.500z" fill="#6480d8" stroke="#3a55b0" stroke-width="0.500"/></svg>
<div class="a" style="left:1643px;top:499px;width:38px;height:14px;background:#3399ff"></div>
<div class="t" style="left:1644px;top:499px;font-size:10px;letter-spacing:0.02px;color:#fff">1,815 pt</div>
<svg style="left:1692px;top:504px" width="9" height="6"><path d="M0.500 0.500h8l-4 4.500z" fill="#111"/></svg>
<div class="t" style="left:1573.75px;top:522px;font-size:10.5px;letter-spacing:-0.34px;">Abschluss:</div>
<div class="a" style="left:1624px;top:520px;width:56px;height:20px;border:1px solid #e8e8e8;border-top-color:#b8b8b8;border-left-color:#b8b8b8;background:#d0d0d0"></div>
<svg style="left:1626px;top:522px" width="16" height="16"><rect x="5" y="3.500" width="10" height="9" fill="#c4c4c4"/><path d="M5 12.500h10" stroke="#8a8a8a"/><path d="M5 8h8" stroke="#111" stroke-width="1.400"/><rect x="3.500" y="6.500" width="3" height="3" fill="#111"/></svg>
<div class="a" style="left:1643px;top:521px;width:18px;height:18px;border:1px solid #555;border-radius:4px;background:linear-gradient(#b8b8b8,#d0d0d0);box-shadow:inset 0 1px 2px #777"></div><svg style="left:1644px;top:522px" width="16" height="16"><path d="M15 3.500h-7a4.500 4.500 0 0 0 0 9h7z" fill="#dcdcdc" stroke="#9a9a9a" stroke-width="0.800"/><path d="M8 8h6" stroke="#111" stroke-width="1.400"/><rect x="6.500" y="6.500" width="3" height="3" fill="#111"/></svg>
<svg style="left:1663px;top:522px" width="16" height="16"><rect x="2" y="3.500" width="12" height="9" fill="#c4c4c4"/><path d="M2 12.500h12" stroke="#8a8a8a"/><path d="M6 8h7" stroke="#111" stroke-width="1.400"/><rect x="4.500" y="6.500" width="3" height="3" fill="#111"/></svg>
<div class="t" style="left:1595.5px;top:546px;font-size:10.5px;letter-spacing:-0.06px;">Ecke:</div>
<div class="a" style="left:1624px;top:544px;width:56px;height:20px;border:1px solid #e8e8e8;border-top-color:#b8b8b8;border-left-color:#b8b8b8;background:#d0d0d0"></div>
<svg style="left:1626px;top:546px" width="16" height="16"><path d="M3 15v-11.500h11.500v6h-5.500v5.500z" fill="#c4c4c4" stroke="#999" stroke-width="0.700"/><path d="M6.500 14v-7.500h3M11.500 13v-3h2" fill="none" stroke="#111" stroke-width="1.500"/><rect x="5" y="5" width="3.500" height="3" fill="#111"/></svg>
<div class="a" style="left:1643px;top:545px;width:18px;height:18px;border:1px solid #555;border-radius:4px;background:linear-gradient(#b8b8b8,#d0d0d0);box-shadow:inset 0 1px 2px #777"></div><svg style="left:1644px;top:546px" width="16" height="16"><path d="M3 15v-7a4.500 4.500 0 0 1 4.500 -4.500h7v6h-5.500v5.500z" fill="#dcdcdc" stroke="#999" stroke-width="0.700"/><path d="M6.500 14v-7.500h3M11.500 13v-3h2" fill="none" stroke="#111" stroke-width="1.500"/><rect x="5" y="5" width="3.500" height="3" fill="#111"/></svg>
<svg style="left:1663px;top:546px" width="16" height="16"><path d="M3 15v-8l3.500 -3.500h8v6h-5.500v5.500z" fill="#c4c4c4" stroke="#999" stroke-width="0.700"/><path d="M6.500 14v-7.500h3M11.500 13v-3h2" fill="none" stroke="#111" stroke-width="1.500"/><rect x="5" y="5" width="3.500" height="3" fill="#111"/></svg>
<div class="t" style="left:1692px;top:546px;font-size:10.5px;letter-spacing:-0.04px;color:#9a9a9a;text-shadow:0 1px 0 #f0f0f0">Max.:</div>
<div class="a" style="left:1720px;top:544px;width:38px;height:20px;border:1px solid #ececec;border-top-color:#b4b4b4;border-left-color:#b4b4b4;background:#d3d3d3"></div>
<div class="a" style="left:1721px;top:545px;width:13px;height:18px;border-right:1px solid #e6e6e6"></div>
<svg style="left:1722px;top:547px" width="10" height="15"><path d="M1.500 5.500L5 1.500L8.500 5.500z" fill="#e0e0e0" stroke="#aaa" stroke-width="0.800"/><path d="M1.500 9.500L5 13.500L8.500 9.500z" fill="#e0e0e0" stroke="#aaa" stroke-width="0.800"/></svg>
<div class="t" style="left:1760px;top:546px;font-size:10.5px;color:#9a9a9a">x</div>
<div class="t" style="left:1568.8px;top:570px;font-size:10.5px;letter-spacing:-0.01px;">Kont. ausr.:</div>
<div class="a" style="left:1624px;top:568px;width:56px;height:20px;border:1px solid #e8e8e8;border-top-color:#b8b8b8;border-left-color:#b8b8b8;background:#d0d0d0"></div>
<div class="a" style="left:1625px;top:569px;width:18px;height:18px;border:1px solid #555;border-radius:4px;background:linear-gradient(#b0b0b0,#cacaca);box-shadow:inset 0 1px 2px #777"></div>
<svg style="left:1627px;top:571px" width="14" height="14"><rect x="2" y="2" width="10" height="10" fill="#c8c8c8" stroke="#8a8a8a" stroke-width="2.600"/><rect x="2" y="2" width="10" height="10" fill="none" stroke="#111" stroke-width="1.100"/><g fill="#fff" stroke="#555" stroke-width="0.600"><rect x="1" y="1" width="2" height="2"/><rect x="11" y="1" width="2" height="2"/><rect x="1" y="11" width="2" height="2"/><rect x="11" y="11" width="2" height="2"/></g></svg>
<svg style="left:1645px;top:571px" width="14" height="14"><rect x="3.500" y="3.500" width="7" height="7" fill="#d0d0d0" stroke="#b8b8b8" stroke-width="2"/><rect x="2" y="2" width="10" height="10" fill="none" stroke="#777" stroke-width="0.800"/><g fill="#fff" stroke="#555" stroke-width="0.600"><rect x="1" y="1" width="2" height="2"/><rect x="11" y="1" width="2" height="2"/><rect x="1" y="11" width="2" height="2"/><rect x="11" y="11" width="2" height="2"/></g></svg>
<svg style="left:1663px;top:571px" width="14" height="14"><rect x="2" y="2" width="10" height="10" fill="#dadada" stroke="#c4c4c4" stroke-width="2"/><rect x="2" y="2" width="10" height="10" fill="none" stroke="#777" stroke-width="0.800"/><g fill="#fff" stroke="#555" stroke-width="0.600"><rect x="1" y="1" width="2" height="2"/><rect x="11" y="1" width="2" height="2"/><rect x="1" y="11" width="2" height="2"/><rect x="11" y="11" width="2" height="2"/></g></svg>
<div class="a" style="left:1571px;top:601px;width:11px;height:12px;background:#fff;border:1px solid #999;border-top-color:#777"></div>
<svg style="left:1572px;top:602px" width="10" height="10"><path d="M1.500 5l2.500 3.500l4.500 -7.500" fill="none" stroke="#2a4ab0" stroke-width="1.600"/></svg>
<div class="t" style="left:1584px;top:600px;font-size:10.5px;letter-spacing:-0.37px;">Gestrichelte Linie</div>
<svg style="left:1699px;top:601px" width="30" height="13"><rect x="1.500" y="1.500" width="27" height="10" fill="none" stroke="#333" stroke-width="1.600" stroke-dasharray="6 3" stroke-dashoffset="-2"/></svg>
<div class="a" style="left:1733px;top:599px;width:33px;height:16px;border:1px solid #555;border-radius:4px;background:linear-gradient(#b4b4b4,#cdcdcd);box-shadow:inset 0 1px 2px #777"></div>
<svg style="left:1735px;top:601px" width="30" height="13"><path d="M1.500 5v-3.500h4M10 1.500h8M23 1.500h4v3.500M27 8v3.500h-4M18 11.500h-8M5.500 11.500h-4v-3.500" fill="none" stroke="#222" stroke-width="1.800"/></svg>
<div class="a" style="left:1571px;top:621px;width:28px;height:16px;background:#fff;border:1px solid #dcdcdc;border-top-color:#b0b0b0"></div>
<div class="t" style="left:1574.5px;top:622px;font-size:10px;letter-spacing:0.61px;">6 pt</div>
<div class="t" style="left:1570.7px;top:638px;font-size:10.5px;letter-spacing:0.03px;">Strich</div>
<div class="a" style="left:1603px;top:621px;width:28px;height:16px;background:#fff;border:1px solid #dcdcdc;border-top-color:#b0b0b0"></div>
<div class="t" style="left:1606.5px;top:622px;font-size:10px;letter-spacing:0.61px;">8 pt</div>
<div class="t" style="left:1602.7px;top:638px;font-size:10.5px;letter-spacing:-0.25px;">Lücke</div>
<div class="a" style="left:1636px;top:621px;width:28px;height:16px;background:#fff;border:1px solid #dcdcdc;border-top-color:#b0b0b0"></div>
<div class="t" style="left:1635.7px;top:638px;font-size:10.5px;letter-spacing:0.03px;">Strich</div>
<div class="a" style="left:1669px;top:621px;width:28px;height:16px;background:#fff;border:1px solid #dcdcdc;border-top-color:#b0b0b0"></div>
<div class="t" style="left:1668.7px;top:638px;font-size:10.5px;letter-spacing:-0.25px;">Lücke</div>
<div class="a" style="left:1702px;top:621px;width:28px;height:16px;background:#fff;border:1px solid #dcdcdc;border-top-color:#b0b0b0"></div>
<div class="t" style="left:1701.7px;top:638px;font-size:10.5px;letter-spacing:0.03px;">Strich</div>
<div class="a" style="left:1735px;top:621px;width:28px;height:16px;background:#fff;border:1px solid #dcdcdc;border-top-color:#b0b0b0"></div>
<div class="t" style="left:1734.7px;top:638px;font-size:10.5px;letter-spacing:-0.25px;">Lücke</div>
<div class="t" style="left:1568.8px;top:664px;font-size:10.5px;letter-spacing:-0.36px;">Pfeilspitzen:</div>
<div class="a" style="left:1624px;top:661px;width:43px;height:19px;background:#fff;border:1px solid #dcdcdc;border-top-color:#a8a8a8;border-left-color:#b8b8b8"></div><div class="a" style="left:1629px;top:669px;width:25px;height:1.500px;background:#222"></div><div class="a" style="left:1657px;top:663px;width:8px;height:15px;border:1px solid #777;border-radius:3px;background:linear-gradient(#f0f0f0,#c8c8c8)"></div><svg style="left:1658px;top:668px" width="6" height="5"><path d="M0.500 0.500h5l-2.500 3.500z" fill="#111"/></svg>
<div class="a" style="left:1680px;top:661px;width:43px;height:19px;background:#fff;border:1px solid #dcdcdc;border-top-color:#a8a8a8;border-left-color:#b8b8b8"></div><div class="a" style="left:1685px;top:669px;width:25px;height:1.500px;background:#222"></div><div class="a" style="left:1713px;top:663px;width:8px;height:15px;border:1px solid #777;border-radius:3px;background:linear-gradient(#f0f0f0,#c8c8c8)"></div><svg style="left:1714px;top:668px" width="6" height="5"><path d="M0.500 0.500h5l-2.500 3.500z" fill="#111"/></svg>
<svg style="left:1750px;top:663px" width="14" height="14"><path d="M1 4.500h10M8 1.500l3.500 3l-3.500 3M13 9.500h-10M6 6.500l-3.500 3l3.500 3" fill="none" stroke="#999" stroke-width="1.300"/></svg>
<div class="t" style="left:1575.0px;top:688px;font-size:10.5px;letter-spacing:-0.13px;color:#a0a0a0;text-shadow:0 1px 0 #f2f2f2">Skalieren:</div>
<div class="a" style="left:1624px;top:686px;width:43px;height:20px;border:1px solid #ececec;border-top-color:#b4b4b4;border-left-color:#b4b4b4;background:#d3d3d3"></div>
<div class="a" style="left:1651px;top:687px;width:15px;height:18px;border-left:1px solid #e8e8e8;background:#d8d8d8"></div>
<div class="t" style="left:1629.5px;top:689px;font-size:10px;letter-spacing:-0.72px;color:#8a8a8a">100</div>
<svg style="left:1656px;top:691px" width="6" height="9"><path d="M1 0.500v8L5 4.500z" fill="#777"/></svg>
<div class="t" style="left:1668px;top:689px;font-size:9.5px;color:#a0a0a0">%</div>
<div class="a" style="left:1680px;top:686px;width:43px;height:20px;border:1px solid #ececec;border-top-color:#b4b4b4;border-left-color:#b4b4b4;background:#d3d3d3"></div>
<div class="a" style="left:1707px;top:687px;width:15px;height:18px;border-left:1px solid #e8e8e8;background:#d8d8d8"></div>
<div class="t" style="left:1685.5px;top:689px;font-size:10px;letter-spacing:-0.72px;color:#8a8a8a">100</div>
<svg style="left:1712px;top:691px" width="6" height="9"><path d="M1 0.500v8L5 4.500z" fill="#777"/></svg>
<div class="t" style="left:1724px;top:689px;font-size:9.5px;color:#a0a0a0">%</div>
<svg style="left:1752px;top:687px" width="10" height="18"><rect x="2.500" y="1.500" width="5" height="14" rx="2.500" fill="#e8e8e8" stroke="#999" stroke-width="1.200"/><path d="M5 5v7" stroke="#999" stroke-width="1.500"/></svg>
<div class="t" style="left:1568.75px;top:714px;font-size:10.5px;letter-spacing:-0.08px;color:#a8a8a8;text-shadow:0 1px 0 #f2f2f2">Ausrichten:</div>
<div class="a" style="left:1624px;top:711px;width:45px;height:20px;border:1px solid #ececec;border-top-color:#b4b4b4;border-left-color:#b4b4b4;background:#d3d3d3"></div>
<svg style="left:1627px;top:713px" width="40" height="16"><g fill="none" stroke="#999" stroke-width="1.200"><path d="M2 3h8M2 9h9"/><path d="M8 5l6 4l-6 4z" fill="#aaa"/><path d="M22 3h14M22 9h9"/><path d="M30 5l6 4l-6 4z" fill="#aaa"/></g></svg>
<div class="a" style="left:1569px;top:736px;width:197px;height:2px;border-top:1px solid #a8a8a8;border-bottom:1px solid #ececec"></div>
<div class="t" style="left:1594.25px;top:744px;font-size:10.5px;letter-spacing:0.07px;">Profil:</div>
<div class="a" style="left:1624px;top:741px;width:95px;height:19px;background:#fff;border:1px solid #dcdcdc;border-top-color:#a8a8a8;border-left-color:#b8b8b8"></div>
<div class="a" style="left:1630px;top:750px;width:31px;height:2px;background:#111"></div>
<div class="t" style="left:1666.5px;top:744px;font-size:10.5px;letter-spacing:-0.35px;">Gleichm.</div>
<div class="a" style="left:1709px;top:743px;width:8px;height:15px;border:1px solid #777;border-radius:3px;background:linear-gradient(#f0f0f0,#c8c8c8)"></div>
<svg style="left:1710px;top:749px" width="6" height="5"><path d="M0.500 0.500h5l-2.500 3.500z" fill="#111"/></svg>
<svg style="left:1727px;top:745px" width="14" height="12"><path d="M1 1v10l5 -5zM13 1v10l-5 -5z" fill="none" stroke="#aaa"/><path d="M7 0v12" stroke="#aaa" stroke-dasharray="1.500 1.500"/></svg>
<svg style="left:1750px;top:741px" width="14" height="16"><path d="M2 1h10l-5 5z" fill="#bbb" stroke="#aaa"/><path d="M2 14h10l-5 -5z" fill="none" stroke="#bbb" stroke-dasharray="1.500 1.500"/></svg>
<div class="red" style="left:1636px;top:516px;width:30px;height:53px;border-width:5px"></div>
<div class="red" style="left:1566px;top:589px;width:213px;height:68px;border-width:5px"></div>
<div class="red" style="left:1723px;top:755px;width:59px;height:31px;border-width:5px"></div>
</div>
</body></html>
